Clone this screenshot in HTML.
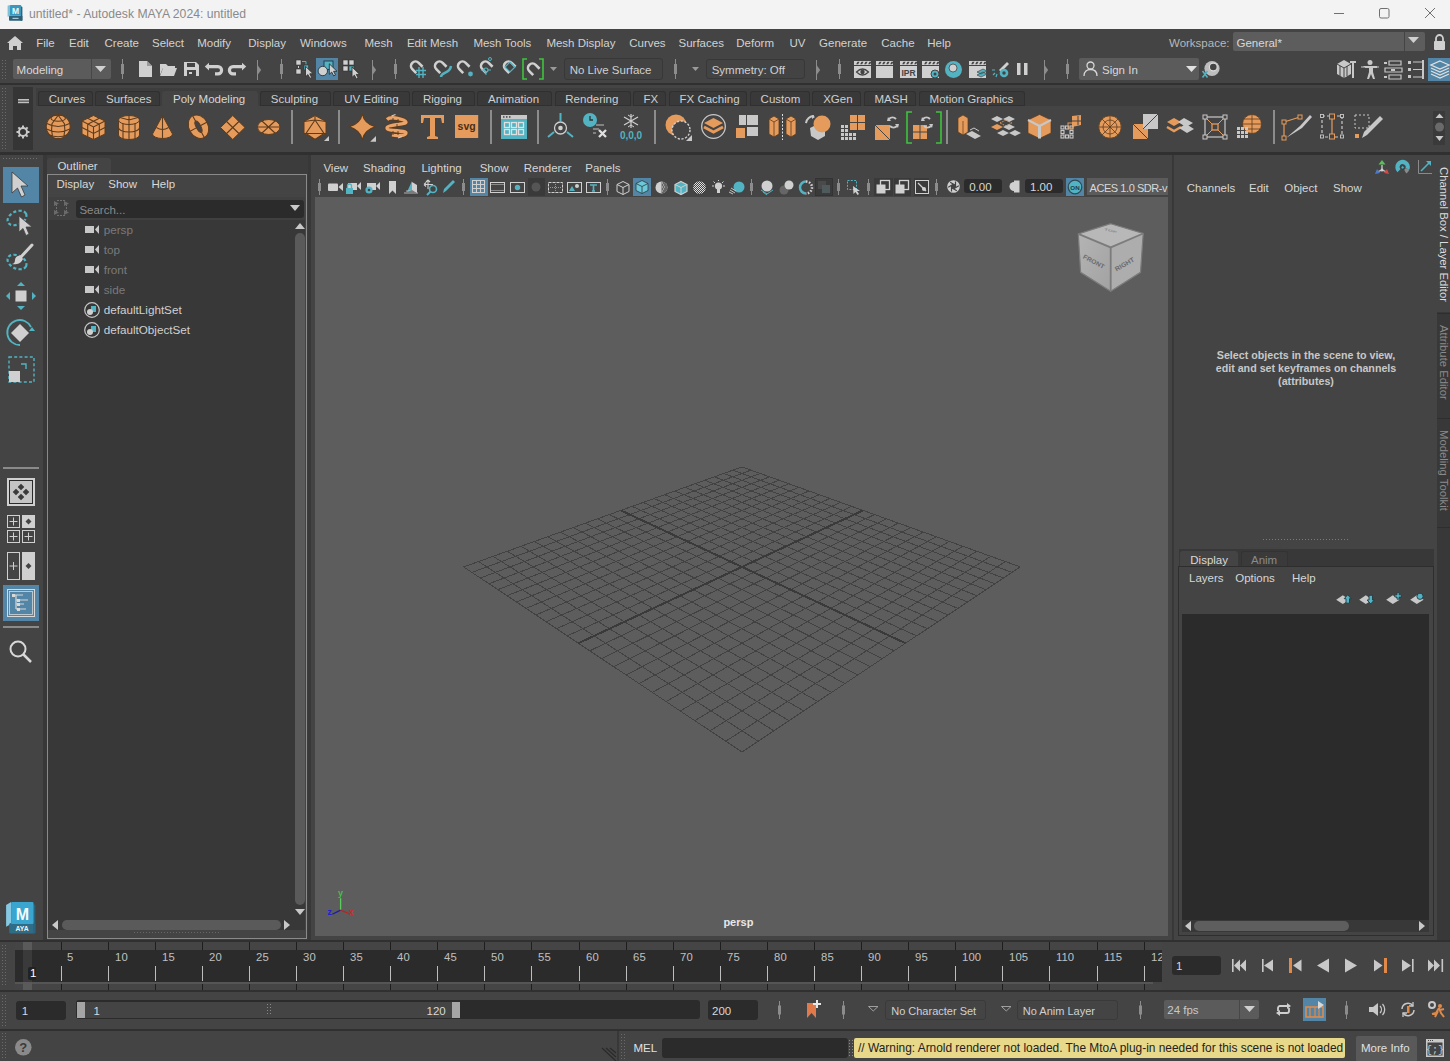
<!DOCTYPE html><html><head><meta charset="utf-8"><style>
html,body{margin:0;padding:0;width:1450px;height:1061px;overflow:hidden;background:#444;}
body>div,body>span,body>svg{position:absolute;}
.t{position:absolute;font-family:"Liberation Sans",sans-serif;white-space:pre;line-height:1;}
svg{overflow:visible}
</style></head><body>
<div style="left:0px;top:0px;width:1450px;height:1061px;background:#444444;"></div>
<div style="left:0px;top:0px;width:1450px;height:29px;background:#f3f3f3;"></div>
<svg style="left:7px;top:4px;" width="17" height="18" viewBox="0 0 17 18"><path d="M0.6 1.8L3 1V12L0.6 12.8z" fill="#7fbfd8"/><rect x="2" y="11.8" width="13.4" height="5" rx="0.8" fill="#2d617a"/><path d="M13.6 2L15.4 3V16.8H13.6z" fill="#2a5f78"/><rect x="3" y="1" width="11.1" height="10.8" rx="0.6" fill="#3b97bb"/><text x="8.6" y="10" font-size="8.5" font-weight="bold" text-anchor="middle" fill="#e8fbff" font-family="Liberation Sans">M</text><rect x="5.5" y="13.8" width="6" height="1.2" fill="#a9c9d6"/></svg>
<span class="t" style="left:29px;top:8.17px;font-size:12.2px;color:#8a8a8a;">untitled* - Autodesk MAYA 2024: untitled</span>
<svg style="left:1334px;top:13px;" width="11" height="2" viewBox="0 0 11 2"><rect width="10" height="1" fill="#707070"/></svg>
<svg style="left:1379px;top:8px;" width="11" height="11" viewBox="0 0 11 11"><rect x="0.5" y="0.5" width="9.5" height="9.5" rx="1.5" fill="none" stroke="#707070"/></svg>
<svg style="left:1425px;top:8px;" width="11" height="11" viewBox="0 0 11 11"><path d="M0 0L10 10M10 0L0 10" stroke="#707070" stroke-width="1"/></svg>
<div style="left:0px;top:29px;width:1450px;height:28px;background:#444444;"></div>
<svg style="left:7px;top:36px;" width="16" height="14" viewBox="0 0 16 14"><path d="M8 0L0 7h2v7h4v-4h4v4h4V7h2z" fill="#cfcfcf"/></svg>
<span class="t" style="left:36.2px;top:37.57px;font-size:11.5px;color:#d2d2d2;">File</span>
<span class="t" style="left:69px;top:37.57px;font-size:11.5px;color:#d2d2d2;">Edit</span>
<span class="t" style="left:104.5px;top:37.57px;font-size:11.5px;color:#d2d2d2;">Create</span>
<span class="t" style="left:152px;top:37.57px;font-size:11.5px;color:#d2d2d2;">Select</span>
<span class="t" style="left:197.2px;top:37.57px;font-size:11.5px;color:#d2d2d2;">Modify</span>
<span class="t" style="left:248.3px;top:37.57px;font-size:11.5px;color:#d2d2d2;">Display</span>
<span class="t" style="left:300px;top:37.57px;font-size:11.5px;color:#d2d2d2;">Windows</span>
<span class="t" style="left:364.5px;top:37.57px;font-size:11.5px;color:#d2d2d2;">Mesh</span>
<span class="t" style="left:406.9px;top:37.57px;font-size:11.5px;color:#d2d2d2;">Edit Mesh</span>
<span class="t" style="left:473.4px;top:37.57px;font-size:11.5px;color:#d2d2d2;">Mesh Tools</span>
<span class="t" style="left:546.4px;top:37.57px;font-size:11.5px;color:#d2d2d2;">Mesh Display</span>
<span class="t" style="left:629.2px;top:37.57px;font-size:11.5px;color:#d2d2d2;">Curves</span>
<span class="t" style="left:678.5px;top:37.57px;font-size:11.5px;color:#d2d2d2;">Surfaces</span>
<span class="t" style="left:736.3px;top:37.57px;font-size:11.5px;color:#d2d2d2;">Deform</span>
<span class="t" style="left:789.4px;top:37.57px;font-size:11.5px;color:#d2d2d2;">UV</span>
<span class="t" style="left:819.1px;top:37.57px;font-size:11.5px;color:#d2d2d2;">Generate</span>
<span class="t" style="left:881.3px;top:37.57px;font-size:11.5px;color:#d2d2d2;">Cache</span>
<span class="t" style="left:927.2px;top:37.57px;font-size:11.5px;color:#d2d2d2;">Help</span>
<span class="t" style="left:1169px;top:37.57px;font-size:11.5px;color:#b8b8b8;">Workspace:</span>
<div style="left:1233px;top:32px;width:192px;height:19px;background:#5d5d5d;border-radius:2px"></div>
<div style="left:1404px;top:32px;width:1px;height:19px;background:#444;"></div>
<span class="t" style="left:1236.5px;top:37.57px;font-size:11.5px;color:#d8d8d8;">General*</span>
<svg style="left:1408px;top:37px;" width="11" height="7" viewBox="0 0 11 7"><path d="M0 0h11L5.5 6z" fill="#d0d0d0"/></svg>
<svg style="left:1433px;top:34px;" width="13" height="16" viewBox="0 0 13 16"><path d="M3 7V4.5a3.5 3.5 0 0 1 7 0V7" fill="none" stroke="#d0d0d0" stroke-width="1.8"/><rect x="1" y="7" width="11" height="9" rx="1" fill="#d0d0d0"/></svg>
<div style="left:0px;top:57px;width:1450px;height:26px;background:#444444;"></div>
<div style="left:0px;top:83px;width:1450px;height:2px;background:#303030;"></div>
<svg style="left:2px;top:60px;" width="4" height="20" viewBox="0 0 4 20"><rect x="0" y="0" width="1" height="1" fill="#6a6a6a"/><rect x="3" y="0" width="1" height="1" fill="#6a6a6a"/><rect x="0" y="3" width="1" height="1" fill="#6a6a6a"/><rect x="3" y="3" width="1" height="1" fill="#6a6a6a"/><rect x="0" y="6" width="1" height="1" fill="#6a6a6a"/><rect x="3" y="6" width="1" height="1" fill="#6a6a6a"/><rect x="0" y="9" width="1" height="1" fill="#6a6a6a"/><rect x="3" y="9" width="1" height="1" fill="#6a6a6a"/><rect x="0" y="12" width="1" height="1" fill="#6a6a6a"/><rect x="3" y="12" width="1" height="1" fill="#6a6a6a"/><rect x="0" y="15" width="1" height="1" fill="#6a6a6a"/><rect x="3" y="15" width="1" height="1" fill="#6a6a6a"/><rect x="0" y="18" width="1" height="1" fill="#6a6a6a"/><rect x="3" y="18" width="1" height="1" fill="#6a6a6a"/></svg>
<div style="left:13px;top:59px;width:98px;height:20px;background:#5b5b5b;border-radius:2px"></div>
<div style="left:91px;top:59px;width:1px;height:20px;background:#474747;"></div>
<span class="t" style="left:16.6px;top:65.27px;font-size:11.5px;color:#d8d8d8;">Modeling</span>
<svg style="left:95px;top:66px;" width="11" height="6" viewBox="0 0 11 6"><path d="M0 0h11L5.5 6z" fill="#cfcfcf"/></svg>
<svg style="left:121.0px;top:59px;" width="3" height="20" viewBox="0 0 3 20"><rect x="1" y="0" width="1" height="20" fill="#8c8c8c"/><rect x="0" y="5.0" width="3" height="10.0" fill="#8c8c8c"/></svg>
<svg style="left:139px;top:61px;" width="13" height="16" viewBox="0 0 13 16"><path d="M0 0h8l5 5v11H0z" fill="#d0d0d0"/><path d="M8 0v5h5" fill="#9a9a9a"/></svg>
<svg style="left:160px;top:63px;" width="17" height="13" viewBox="0 0 17 13"><path d="M0 1h6l2 2h7v2H3L0 12z" fill="#d0d0d0"/><path d="M3 5h14l-3 8H0z" fill="#d0d0d0"/></svg>
<svg style="left:184px;top:62px;" width="15" height="14" viewBox="0 0 15 14"><path d="M0 0h12l3 3v11H0z" fill="#d0d0d0"/><rect x="3" y="1" width="8" height="4" fill="#444"/><rect x="3" y="8" width="9" height="6" fill="#444"/><rect x="5" y="10" width="3" height="2" fill="#d0d0d0"/></svg>
<svg style="left:204px;top:62px;" width="19" height="14" viewBox="0 0 19 14"><path d="M4 4.6H14a3.6 3.6 0 0 1 0 7.2H11" fill="none" stroke="#d0d0d0" stroke-width="3.2"/><path d="M0.8 4.6L5 0.8V8.4z" fill="#d0d0d0"/></svg>
<svg style="left:228px;top:62px;" width="19" height="14" viewBox="0 0 19 14"><path d="M15 4.6H5a3.6 3.6 0 0 0 0 7.2H8" fill="none" stroke="#d0d0d0" stroke-width="3.2"/><path d="M18.2 4.6L14 0.8V8.4z" fill="#d0d0d0"/></svg>
<svg style="left:257px;top:59.5px;" width="5" height="20" viewBox="0 0 5 20"><rect x="0" y="0" width="1" height="20" fill="#8c8c8c"/><path d="M0.5 5L4.2 10L0.5 15z" fill="#8c8c8c"/></svg>
<svg style="left:280.0px;top:59px;" width="3" height="20" viewBox="0 0 3 20"><rect x="1" y="0" width="1" height="20" fill="#8c8c8c"/><rect x="0" y="5.0" width="3" height="10.0" fill="#8c8c8c"/></svg>
<svg style="left:294px;top:58px;" width="22" height="22" viewBox="0 0 22 22"><rect x="2" y="2" width="5" height="5" fill="#d0d0d0" stroke="#333" stroke-width="0.6"/><rect x="2" y="11" width="5" height="5" fill="#d0d0d0" stroke="#333" stroke-width="0.6"/><rect x="4" y="8" width="1" height="2" fill="#d0d0d0"/><path d="M8 3.5h4v3" fill="none" stroke="#52b3c2" stroke-width="1"/><rect x="10" y="7" width="4.5" height="5" fill="#52b3c2" stroke="#333" stroke-width="0.6"/><path d="M11.5 8.3v10.5l2.4-2.2 2 3.8 1.8-0.9-1.9-3.7h3.4z" fill="#d0d0d0" stroke="#333" stroke-width="0.9"/></svg>
<div style="left:316px;top:57.8px;width:22px;height:22.2px;background:#5285a6;"></div>
<svg style="left:316px;top:58px;" width="22" height="22" viewBox="0 0 22 22"><rect x="8" y="3" width="9" height="8.5" fill="#52b3c2" stroke="#1f3540" stroke-width="0.9"/><circle cx="6.8" cy="13" r="4.7" fill="#d0d0d0" stroke="#1f3540" stroke-width="0.9"/><path d="M13.3 5.8v10.5l2.4-2.2 2 3.8 1.8-0.9-1.9-3.7h3.4z" fill="#d0d0d0" stroke="#1f3540" stroke-width="0.9"/></svg>
<svg style="left:342px;top:58px;" width="22" height="22" viewBox="0 0 22 22"><rect x="1" y="2" width="5" height="5" fill="#d0d0d0" stroke="#333" stroke-width="0.6"/><rect x="7" y="2" width="5" height="5" fill="#d0d0d0" stroke="#333" stroke-width="0.6"/><rect x="1" y="8" width="5" height="5" fill="#d0d0d0" stroke="#333" stroke-width="0.6"/><rect x="7" y="8" width="5" height="5" fill="#52b3c2" stroke="#333" stroke-width="0.6"/><path d="M10 8.9v10.5l2.4-2.2 2 3.8 1.8-0.9-1.9-3.7h3.4z" fill="#d0d0d0" stroke="#333" stroke-width="0.9"/></svg>
<svg style="left:372px;top:59.5px;" width="5" height="20" viewBox="0 0 5 20"><rect x="0" y="0" width="1" height="20" fill="#8c8c8c"/><path d="M0.5 5L4.2 10L0.5 15z" fill="#8c8c8c"/></svg>
<svg style="left:394.0px;top:59px;" width="3" height="20" viewBox="0 0 3 20"><rect x="1" y="0" width="1" height="20" fill="#8c8c8c"/><rect x="0" y="5.0" width="3" height="10.0" fill="#8c8c8c"/></svg>
<svg style="left:400px;top:53px;" width="24" height="24" viewBox="0 0 24 24"><g transform="translate(4 4)"><path d="M-4.5 5.5V0A4.5 4.5 0 0 1 4.5 0V5.5" fill="none" stroke="#d0d0d0" stroke-width="2.6" transform="translate(11.5 9) rotate(-45)"/><path d="M15 10v11M19 10v11M12 13.5h10M12 17.5h10" stroke="#52b3c2" stroke-width="1.4"/></g></svg>
<svg style="left:424px;top:53px;" width="24" height="24" viewBox="0 0 24 24"><g transform="translate(4 4)"><path d="M-4.5 5.5V0A4.5 4.5 0 0 1 4.5 0V5.5" fill="none" stroke="#d0d0d0" stroke-width="2.6" transform="translate(11.5 9) rotate(-45)"/><path d="M13 20c0-5 9-3 10-11" fill="none" stroke="#52b3c2" stroke-width="2.4"/></g></svg>
<svg style="left:447px;top:53px;" width="24" height="24" viewBox="0 0 24 24"><g transform="translate(4 4)"><path d="M-4.5 5.5V0A4.5 4.5 0 0 1 4.5 0V5.5" fill="none" stroke="#d0d0d0" stroke-width="2.6" transform="translate(11.5 9) rotate(-45)"/><circle cx="19.5" cy="17" r="2.4" fill="#52b3c2"/></g></svg>
<svg style="left:470px;top:53px;" width="24" height="24" viewBox="0 0 24 24"><g transform="translate(4 4)"><path d="M-4.5 5.5V0A4.5 4.5 0 0 1 4.5 0V5.5" fill="none" stroke="#d0d0d0" stroke-width="2.6" transform="translate(11.5 9) rotate(-45)"/><circle cx="12" cy="13" r="2" fill="none" stroke="#52b3c2" stroke-width="1.2"/><circle cx="16" cy="2" r="1.5" fill="none" stroke="#52b3c2"/><path d="M7 13h3M14 13h3M12 15v3" stroke="#52b3c2"/></g></svg>
<svg style="left:493px;top:53px;" width="24" height="24" viewBox="0 0 24 24"><g transform="translate(4 4)"><path d="M-4.5 5.5V0A4.5 4.5 0 0 1 4.5 0V5.5" fill="none" stroke="#d0d0d0" stroke-width="2.6" transform="translate(11.5 9) rotate(-45)"/><path d="M8 10l5-5 5 5-5 5z" fill="none" stroke="#52b3c2" stroke-width="1.2"/></g></svg>
<svg style="left:522px;top:58px;" width="22" height="22" viewBox="0 0 22 22"><path d="M5 1H1v20h4M17 1h4v20h-4" fill="none" stroke="#3ec43e" stroke-width="1.6"/><path d="M-4.5 5.5V0A4.5 4.5 0 0 1 4.5 0V5.5" fill="none" stroke="#d0d0d0" stroke-width="2.6" transform="translate(10.5 10) rotate(-45)"/></svg>
<svg style="left:550px;top:67px;" width="7" height="4" viewBox="0 0 7 4"><path d="M0 0h7L3.5 4z" fill="#9a9a9a"/></svg>
<div style="left:563.5px;top:58px;width:99px;height:22px;background:#434343;border:1px solid #383838;border-radius:3px;box-sizing:border-box"></div>
<span class="t" style="left:569.7px;top:65.27px;font-size:11.5px;color:#d0d0d0;">No Live Surface</span>
<svg style="left:674.0px;top:59px;" width="3" height="20" viewBox="0 0 3 20"><rect x="1" y="0" width="1" height="20" fill="#8c8c8c"/><rect x="0" y="5.0" width="3" height="10.0" fill="#8c8c8c"/></svg>
<svg style="left:692px;top:67px;" width="7" height="4" viewBox="0 0 7 4"><path d="M0 0h7L3.5 4z" fill="#9a9a9a"/></svg>
<div style="left:705.7px;top:58.6px;width:99px;height:20.5px;background:#434343;border:1px solid #383838;border-radius:3px;box-sizing:border-box"></div>
<span class="t" style="left:711.7px;top:65.27px;font-size:11.5px;color:#d0d0d0;">Symmetry: Off</span>
<svg style="left:815.5px;top:59.5px;" width="5" height="20" viewBox="0 0 5 20"><rect x="0" y="0" width="1" height="20" fill="#8c8c8c"/><path d="M0.5 5L4.2 10L0.5 15z" fill="#8c8c8c"/></svg>
<svg style="left:838.1px;top:59px;" width="3" height="20" viewBox="0 0 3 20"><rect x="1" y="0" width="1" height="20" fill="#8c8c8c"/><rect x="0" y="5.0" width="3" height="10.0" fill="#8c8c8c"/></svg>
<svg style="left:853.6px;top:61px;" width="17" height="17" viewBox="0 0 17 17"><rect x="0" y="0" width="17" height="4" fill="#d0d0d0"/><rect x="4" y="0.8" width="2" height="2.4" fill="#444" transform="skewX(-30)"/><rect x="8" y="0.8" width="2" height="2.4" fill="#444" transform="skewX(-30)"/><rect x="12" y="0.8" width="2" height="2.4" fill="#444" transform="skewX(-30)"/><rect x="16" y="0.8" width="2" height="2.4" fill="#444" transform="skewX(-30)"/><rect x="0" y="5" width="17" height="12" fill="#d0d0d0"/><path d="M2.5 11Q8.5 5 14.5 11Q8.5 17 2.5 11z" fill="none" stroke="#444" stroke-width="1.2"/><circle cx="8.5" cy="11" r="2.2" fill="#444"/></svg>
<svg style="left:876.3px;top:61px;" width="17" height="17" viewBox="0 0 17 17"><rect x="0" y="0" width="17" height="4" fill="#d0d0d0"/><rect x="4" y="0.8" width="2" height="2.4" fill="#444" transform="skewX(-30)"/><rect x="8" y="0.8" width="2" height="2.4" fill="#444" transform="skewX(-30)"/><rect x="12" y="0.8" width="2" height="2.4" fill="#444" transform="skewX(-30)"/><rect x="16" y="0.8" width="2" height="2.4" fill="#444" transform="skewX(-30)"/><rect x="0" y="5" width="17" height="12" fill="#d0d0d0"/></svg>
<svg style="left:899.5px;top:61px;" width="17" height="17" viewBox="0 0 17 17"><rect x="0" y="0" width="17" height="4" fill="#d0d0d0"/><rect x="4" y="0.8" width="2" height="2.4" fill="#444" transform="skewX(-30)"/><rect x="8" y="0.8" width="2" height="2.4" fill="#444" transform="skewX(-30)"/><rect x="12" y="0.8" width="2" height="2.4" fill="#444" transform="skewX(-30)"/><rect x="16" y="0.8" width="2" height="2.4" fill="#444" transform="skewX(-30)"/><rect x="0" y="5" width="17" height="12" fill="#d0d0d0"/><text x="8.5" y="15" font-size="8.5" font-weight="bold" text-anchor="middle" fill="#444" font-family="Liberation Sans">IPR</text></svg>
<svg style="left:922.4px;top:61px;" width="17" height="17" viewBox="0 0 17 17"><rect x="0" y="0" width="17" height="4" fill="#d0d0d0"/><rect x="4" y="0.8" width="2" height="2.4" fill="#444" transform="skewX(-30)"/><rect x="8" y="0.8" width="2" height="2.4" fill="#444" transform="skewX(-30)"/><rect x="12" y="0.8" width="2" height="2.4" fill="#444" transform="skewX(-30)"/><rect x="16" y="0.8" width="2" height="2.4" fill="#444" transform="skewX(-30)"/><rect x="0" y="5" width="17" height="12" fill="#d0d0d0"/><circle cx="13" cy="13" r="4" fill="#52b3c2" stroke="#444"/><circle cx="13" cy="13" r="1.5" fill="#444"/></svg>
<svg style="left:945px;top:61px;" width="17" height="17" viewBox="0 0 17 17"><circle cx="8.5" cy="8.5" r="8.5" fill="#52b3c2"/><circle cx="8" cy="7" r="4" fill="#d0d0d0" stroke="#333" stroke-width="0.7"/></svg>
<svg style="left:968.8px;top:61px;" width="17" height="17" viewBox="0 0 17 17"><rect x="0" y="0" width="17" height="4" fill="#d0d0d0"/><rect x="4" y="0.8" width="2" height="2.4" fill="#444" transform="skewX(-30)"/><rect x="8" y="0.8" width="2" height="2.4" fill="#444" transform="skewX(-30)"/><rect x="12" y="0.8" width="2" height="2.4" fill="#444" transform="skewX(-30)"/><rect x="16" y="0.8" width="2" height="2.4" fill="#444" transform="skewX(-30)"/><rect x="0" y="5" width="17" height="12" fill="#d0d0d0"/><path d="M8 11l6-3 4 2-6 3z M8 14l6-3 4 2-6 3z" fill="#52b3c2" stroke="#444" stroke-width="0.7"/></svg>
<svg style="left:991.7px;top:61px;" width="18" height="17" viewBox="0 0 18 17"><path d="M7 9L15 1l2 2-8 8z" fill="#d0d0d0"/><path d="M0 9h3M3 12l-2 2M5 13l-1 3" stroke="#52b3c2" stroke-width="1.2"/><circle cx="12" cy="12" r="4.3" fill="#52b3c2"/><circle cx="12" cy="12" r="1.7" fill="#444"/></svg>
<svg style="left:1017px;top:63px;" width="11" height="12" viewBox="0 0 11 12"><rect x="0" y="0" width="3.5" height="12" fill="#d0d0d0"/><rect x="7" y="0" width="3.5" height="12" fill="#d0d0d0"/></svg>
<svg style="left:1044px;top:59.5px;" width="5" height="20" viewBox="0 0 5 20"><rect x="0" y="0" width="1" height="20" fill="#8c8c8c"/><path d="M0.5 5L4.2 10L0.5 15z" fill="#8c8c8c"/></svg>
<svg style="left:1066.0px;top:59px;" width="3" height="20" viewBox="0 0 3 20"><rect x="1" y="0" width="1" height="20" fill="#8c8c8c"/><rect x="0" y="5.0" width="3" height="10.0" fill="#8c8c8c"/></svg>
<div style="left:1079px;top:58px;width:120px;height:22px;background:#5b5b5b;border-radius:2px"></div>
<svg style="left:1083px;top:61px;" width="15" height="15" viewBox="0 0 15 15"><circle cx="7.5" cy="4.5" r="3.5" fill="none" stroke="#d8d8d8" stroke-width="1.3"/><path d="M1 15c0-5 3-6.5 6.5-6.5S14 10 14 15" fill="none" stroke="#d8d8d8" stroke-width="1.3"/></svg>
<span class="t" style="left:1102px;top:65.27px;font-size:11.5px;color:#d8d8d8;">Sign In</span>
<svg style="left:1186px;top:66px;" width="11" height="6" viewBox="0 0 11 6"><path d="M0 0h11L5.5 6z" fill="#e0e0e0"/></svg>
<svg style="left:1201px;top:59px;" width="22" height="20" viewBox="0 0 22 20"><circle cx="11" cy="9.5" r="7.6" fill="#bdbdbd"/><circle cx="12.3" cy="8" r="3.9" fill="#444" stroke="#dcdcdc" stroke-width="1.2"/><path d="M1.5 12l5 6.5M6.5 12l-5 6.5" stroke="#52b3c2" stroke-width="1.6"/></svg>
<svg style="left:1337px;top:60px;" width="19" height="18" viewBox="0 0 19 18"><path d="M0 4l7-4 7 4v10l-7 4-7-4z" fill="#c8c8c8"/><path d="M7 8v10M0 4l7 4 7-4" stroke="#444" fill="none"/><path d="M3 6v10M10 6v10" stroke="#444"/><rect x="13" y="1" width="6" height="2" fill="#c8c8c8"/><rect x="15" y="1" width="2" height="17" fill="#c8c8c8"/></svg>
<svg style="left:1361px;top:60px;" width="18" height="19" viewBox="0 0 18 19"><circle cx="9" cy="2.5" r="2.5" fill="#c8c8c8"/><path d="M2 6h14v2h-4v4l2 7h-2l-2-5-2 5H6l2-7V8H4z" fill="#c8c8c8"/><path d="M0 7h3M15 7h3" stroke="#c8c8c8"/></svg>
<svg style="left:1384px;top:60px;" width="19" height="19" viewBox="0 0 19 19"><path d="M5 1h12v4H5zM1 8h17v4H1zM5 15h12v4H5z" fill="none" stroke="#c8c8c8" stroke-width="1.2"/><rect x="0" y="2" width="3" height="2" fill="#c8c8c8"/><rect x="7" y="9" width="4" height="2" fill="#c8c8c8"/><rect x="0" y="16" width="3" height="2" fill="#c8c8c8"/></svg>
<svg style="left:1408px;top:60px;" width="16" height="19" viewBox="0 0 16 19"><path d="M5 2h9M5 9.5h9M5 17h9" stroke="#c8c8c8" stroke-width="1.2"/><rect x="0" y="1" width="3" height="3" fill="#c8c8c8"/><rect x="0" y="8" width="3" height="3" fill="#c8c8c8"/><rect x="0" y="15" width="3" height="3" fill="#c8c8c8"/><rect x="14" y="0" width="2" height="19" fill="#c8c8c8"/></svg>
<div style="left:1428px;top:58px;width:22px;height:23px;background:#5285a6;"></div>
<svg style="left:1431px;top:61px;" width="18" height="17" viewBox="0 0 18 17"><path d="M9 0l9 4-9 4-9-4z M0 7l9 4 9-4 M0 10l9 4 9-4 M0 13l9 4 9-4" fill="none" stroke="#e0e0e0" stroke-width="1.3"/></svg>
<div style="left:0px;top:85px;width:1450px;height:68px;background:#444;"></div>
<svg style="left:2px;top:88px;" width="4" height="62" viewBox="0 0 4 62"><rect x="0" y="0" width="1" height="1" fill="#6a6a6a"/><rect x="3" y="0" width="1" height="1" fill="#6a6a6a"/><rect x="0" y="3" width="1" height="1" fill="#6a6a6a"/><rect x="3" y="3" width="1" height="1" fill="#6a6a6a"/><rect x="0" y="6" width="1" height="1" fill="#6a6a6a"/><rect x="3" y="6" width="1" height="1" fill="#6a6a6a"/><rect x="0" y="9" width="1" height="1" fill="#6a6a6a"/><rect x="3" y="9" width="1" height="1" fill="#6a6a6a"/><rect x="0" y="12" width="1" height="1" fill="#6a6a6a"/><rect x="3" y="12" width="1" height="1" fill="#6a6a6a"/><rect x="0" y="15" width="1" height="1" fill="#6a6a6a"/><rect x="3" y="15" width="1" height="1" fill="#6a6a6a"/><rect x="0" y="18" width="1" height="1" fill="#6a6a6a"/><rect x="3" y="18" width="1" height="1" fill="#6a6a6a"/><rect x="0" y="21" width="1" height="1" fill="#6a6a6a"/><rect x="3" y="21" width="1" height="1" fill="#6a6a6a"/><rect x="0" y="24" width="1" height="1" fill="#6a6a6a"/><rect x="3" y="24" width="1" height="1" fill="#6a6a6a"/><rect x="0" y="27" width="1" height="1" fill="#6a6a6a"/><rect x="3" y="27" width="1" height="1" fill="#6a6a6a"/><rect x="0" y="30" width="1" height="1" fill="#6a6a6a"/><rect x="3" y="30" width="1" height="1" fill="#6a6a6a"/><rect x="0" y="33" width="1" height="1" fill="#6a6a6a"/><rect x="3" y="33" width="1" height="1" fill="#6a6a6a"/><rect x="0" y="36" width="1" height="1" fill="#6a6a6a"/><rect x="3" y="36" width="1" height="1" fill="#6a6a6a"/><rect x="0" y="39" width="1" height="1" fill="#6a6a6a"/><rect x="3" y="39" width="1" height="1" fill="#6a6a6a"/><rect x="0" y="42" width="1" height="1" fill="#6a6a6a"/><rect x="3" y="42" width="1" height="1" fill="#6a6a6a"/><rect x="0" y="45" width="1" height="1" fill="#6a6a6a"/><rect x="3" y="45" width="1" height="1" fill="#6a6a6a"/><rect x="0" y="48" width="1" height="1" fill="#6a6a6a"/><rect x="3" y="48" width="1" height="1" fill="#6a6a6a"/><rect x="0" y="51" width="1" height="1" fill="#6a6a6a"/><rect x="3" y="51" width="1" height="1" fill="#6a6a6a"/><rect x="0" y="54" width="1" height="1" fill="#6a6a6a"/><rect x="3" y="54" width="1" height="1" fill="#6a6a6a"/><rect x="0" y="57" width="1" height="1" fill="#6a6a6a"/><rect x="3" y="57" width="1" height="1" fill="#6a6a6a"/><rect x="0" y="60" width="1" height="1" fill="#6a6a6a"/><rect x="3" y="60" width="1" height="1" fill="#6a6a6a"/></svg>
<div style="left:13px;top:87px;width:20px;height:63px;background:#353535;"></div>
<svg style="left:18px;top:99px;" width="11" height="4" viewBox="0 0 11 4"><rect width="11" height="1.6" fill="#c0c0c0"/><rect y="2.6" width="11" height="1.6" fill="#c0c0c0"/></svg>
<svg style="left:16px;top:125px;" width="14" height="14" viewBox="0 0 14 14"><circle cx="7" cy="7" r="4" fill="none" stroke="#c8c8c8" stroke-width="2"/><rect x="6" y="0.5" width="2" height="3" fill="#c8c8c8" transform="rotate(0 7 7)"/><rect x="6" y="0.5" width="2" height="3" fill="#c8c8c8" transform="rotate(45 7 7)"/><rect x="6" y="0.5" width="2" height="3" fill="#c8c8c8" transform="rotate(90 7 7)"/><rect x="6" y="0.5" width="2" height="3" fill="#c8c8c8" transform="rotate(135 7 7)"/><rect x="6" y="0.5" width="2" height="3" fill="#c8c8c8" transform="rotate(180 7 7)"/><rect x="6" y="0.5" width="2" height="3" fill="#c8c8c8" transform="rotate(225 7 7)"/><rect x="6" y="0.5" width="2" height="3" fill="#c8c8c8" transform="rotate(270 7 7)"/><rect x="6" y="0.5" width="2" height="3" fill="#c8c8c8" transform="rotate(315 7 7)"/></svg>
<div style="left:36px;top:88px;width:1414px;height:18px;background:#3d3d3d;"></div>
<div style="left:38px;top:91px;width:55.099999999999994px;height:15px;background:#393939;border-radius:3px 3px 0 0;box-shadow:inset 0 0 0 1px #303030"></div>
<span class="t" style="left:48.8px;top:94.27px;font-size:11.5px;color:#cfcfcf;">Curves</span>
<div style="left:95.4px;top:91px;width:64.6px;height:15px;background:#393939;border-radius:3px 3px 0 0;box-shadow:inset 0 0 0 1px #303030"></div>
<span class="t" style="left:106px;top:94.27px;font-size:11.5px;color:#cfcfcf;">Surfaces</span>
<div style="left:161.8px;top:90.5px;width:95.89999999999998px;height:15.5px;background:#444;border-radius:3px 3px 0 0;"></div>
<span class="t" style="left:173px;top:94.27px;font-size:11.5px;color:#d6d6d6;">Poly Modeling</span>
<div style="left:260.4px;top:91px;width:70.60000000000002px;height:15px;background:#393939;border-radius:3px 3px 0 0;box-shadow:inset 0 0 0 1px #303030"></div>
<span class="t" style="left:270.8px;top:94.27px;font-size:11.5px;color:#cfcfcf;">Sculpting</span>
<div style="left:333px;top:91px;width:76.80000000000001px;height:15px;background:#393939;border-radius:3px 3px 0 0;box-shadow:inset 0 0 0 1px #303030"></div>
<span class="t" style="left:344.3px;top:94.27px;font-size:11.5px;color:#cfcfcf;">UV Editing</span>
<div style="left:411.5px;top:91px;width:63.5px;height:15px;background:#393939;border-radius:3px 3px 0 0;box-shadow:inset 0 0 0 1px #303030"></div>
<span class="t" style="left:423px;top:94.27px;font-size:11.5px;color:#cfcfcf;">Rigging</span>
<div style="left:477.4px;top:91px;width:74.60000000000002px;height:15px;background:#393939;border-radius:3px 3px 0 0;box-shadow:inset 0 0 0 1px #303030"></div>
<span class="t" style="left:488px;top:94.27px;font-size:11.5px;color:#cfcfcf;">Animation</span>
<div style="left:554.5px;top:91px;width:76.0px;height:15px;background:#393939;border-radius:3px 3px 0 0;box-shadow:inset 0 0 0 1px #303030"></div>
<span class="t" style="left:565.3px;top:94.27px;font-size:11.5px;color:#cfcfcf;">Rendering</span>
<div style="left:632.9px;top:91px;width:33.10000000000002px;height:15px;background:#393939;border-radius:3px 3px 0 0;box-shadow:inset 0 0 0 1px #303030"></div>
<span class="t" style="left:643.4px;top:94.27px;font-size:11.5px;color:#cfcfcf;">FX</span>
<div style="left:668.7px;top:91px;width:78.29999999999995px;height:15px;background:#393939;border-radius:3px 3px 0 0;box-shadow:inset 0 0 0 1px #303030"></div>
<span class="t" style="left:679.5px;top:94.27px;font-size:11.5px;color:#cfcfcf;">FX Caching</span>
<div style="left:749.8px;top:91px;width:59.80000000000007px;height:15px;background:#393939;border-radius:3px 3px 0 0;box-shadow:inset 0 0 0 1px #303030"></div>
<span class="t" style="left:760.6px;top:94.27px;font-size:11.5px;color:#cfcfcf;">Custom</span>
<div style="left:812.3px;top:91px;width:49.0px;height:15px;background:#393939;border-radius:3px 3px 0 0;box-shadow:inset 0 0 0 1px #303030"></div>
<span class="t" style="left:823.2px;top:94.27px;font-size:11.5px;color:#cfcfcf;">XGen</span>
<div style="left:863.7px;top:91px;width:52.299999999999955px;height:15px;background:#393939;border-radius:3px 3px 0 0;box-shadow:inset 0 0 0 1px #303030"></div>
<span class="t" style="left:874.5px;top:94.27px;font-size:11.5px;color:#cfcfcf;">MASH</span>
<div style="left:918.8px;top:91px;width:106.10000000000014px;height:15px;background:#393939;border-radius:3px 3px 0 0;box-shadow:inset 0 0 0 1px #303030"></div>
<span class="t" style="left:929.6px;top:94.27px;font-size:11.5px;color:#cfcfcf;">Motion Graphics</span>
<svg style="left:45.8px;top:114.3px;" width="25" height="25.5" viewBox="0 0 25 25.5"><circle cx="12.2" cy="12.6" r="12" fill="#e59b5b" stroke="#5c3b1e" stroke-width="1.1"/><ellipse cx="12.2" cy="4.2" rx="7.2" ry="3" stroke="#5c3b1e" stroke-width="1.1" fill="none"/><path d="M0.8 9.5Q12.2 15.5 23.6 9.5M0.5 15Q12.2 21 23.9 15M2.5 20.5Q12.2 25 21.9 20.5M12.2 1.2L6 9.8Q4.8 16 6.6 23M12.2 1.2L18.4 9.8Q19.6 16 17.8 23" stroke="#5c3b1e" stroke-width="1.1" fill="none"/></svg>
<svg style="left:80.5px;top:114.5px;" width="25" height="25" viewBox="0 0 25 25"><path d="M12.5 0.5L24 6v13L12.5 24.5L1 19V6z" fill="#e59b5b" stroke="#5c3b1e"/><path d="M1 6l11.5 6L24 6M12.5 12v12.5M6.7 3.2l11.5 6M18.3 3.2L6.7 9.2M1 12.5l11.5 6 11.5-6M6.7 9v13M18.3 9v13" stroke="#5c3b1e" stroke-width="1.1" fill="none"/></svg>
<svg style="left:117.5px;top:114.5px;" width="22" height="25" viewBox="0 0 22 25"><path d="M0.5 5v15a10.5 4.5 0 0 0 21 0V5z" fill="#e59b5b" stroke="#5c3b1e"/><ellipse cx="11" cy="5" rx="10.5" ry="4.5" fill="#e59b5b" stroke="#5c3b1e"/><path d="M0.5 12.5a10.5 4.5 0 0 0 21 0M11 9.5v15M5 9v14M17 9v14M11 0.5v9M2 2.5l9 2.5 9-2.5" stroke="#5c3b1e" stroke-width="1.1" fill="none"/></svg>
<svg style="left:152.3px;top:115px;" width="21" height="24" viewBox="0 0 21 24"><path d="M10.5 0.5L0.5 19a10 4.5 0 0 0 20 0z" fill="#e59b5b" stroke="#5c3b1e"/><path d="M10.5 0.5v23M4.3 12.5Q10.5 16.5 16.7 12.5" stroke="#5c3b1e" stroke-width="1.1" fill="none"/></svg>
<svg style="left:187.7px;top:114.3px;" width="21" height="25.5" viewBox="0 0 21 25.5"><g transform="rotate(-28 10.5 12.7)"><ellipse cx="10.5" cy="12.7" rx="9.6" ry="12.3" fill="#e59b5b" stroke="#5c3b1e"/><ellipse cx="10.5" cy="12.7" rx="2.3" ry="6.3" fill="#444" stroke="#5c3b1e"/><path d="M1 12.7h7M13 12.7h7.4M10.5 0.5v6M10.5 19v6" stroke="#5c3b1e" stroke-width="1.1" fill="none"/></g></svg>
<svg style="left:220.2px;top:115px;" width="25.5" height="25" viewBox="0 0 25.5 25"><path d="M12.75 0.5L25 12.5L12.75 24.5L0.5 12.5z" fill="#e59b5b" stroke="#5c3b1e"/><path d="M6.6 6.5L18.9 18.5M18.9 6.5L6.6 18.5" stroke="#5c3b1e" stroke-width="1.1" fill="none"/></svg>
<svg style="left:256.6px;top:119px;" width="23.5" height="16" viewBox="0 0 23.5 16"><ellipse cx="11.75" cy="8" rx="11.3" ry="7.5" fill="#e59b5b" stroke="#5c3b1e"/><path d="M0.5 8h22.5M5 2l13 12M18 2L5 14" stroke="#5c3b1e" stroke-width="1.1" fill="none"/></svg>
<div style="left:291px;top:110px;width:2px;height:34px;background:#8c8c8c;"></div>
<svg style="left:303px;top:114.5px;" width="26.5" height="26" viewBox="0 0 26.5 26"><path d="M12 0.5L23 6.5v12L12 24.5L1 18.5v-12z" fill="#e59b5b" stroke="#5c3b1e"/><path d="M12 5L3 18.5h18z M12 0.5V5M1 6.5L12 5L23 6.5M1 18.5L3 18.5M21 18.5h2M12 24.5L3 18.5M12 24.5L21 18.5" stroke="#5c3b1e" stroke-width="1.1" fill="none"/><path d="M26 21v5h-5z" fill="#c8c8c8"/></svg>
<div style="left:338.4px;top:110px;width:2px;height:34px;background:#8c8c8c;"></div>
<svg style="left:347.7px;top:113px;" width="29" height="29" viewBox="0 0 29 29"><path d="M14.3 0.8Q16.3 10.6 27.3 13.8Q16.3 17 14.3 26.8Q12.3 17 1.3 13.8Q12.3 10.6 14.3 0.8z" fill="#e59b5b" stroke="#5c3b1e" stroke-width="1.1" stroke-linejoin="round"/><path d="M28 23v5.8h-5.8z" fill="#c8c8c8"/></svg>
<svg style="left:384px;top:114px;" width="26" height="26" viewBox="0 0 26 26"><path d="M3 5.5c4-4 18 0 19 2.5S3 10.5 3 14s19 2 19 5-9 3-14 2" fill="none" stroke="#5c3b1e" stroke-width="5"/><path d="M3 5.5c4-4 18 0 19 2.5S3 10.5 3 14s19 2 19 5-9 3-14 2" fill="none" stroke="#e8a46a" stroke-width="3.3"/><path d="M9 4v4M14 5v4M13 10v4M9 17v4M14 17v4" stroke="#5c3b1e" stroke-width="0.9"/><path d="M7.5 2l4-1.5M14 24l4-1.5" stroke="#d0d0d0" stroke-width="1.3"/></svg>
<svg style="left:421px;top:115px;" width="23" height="24" viewBox="0 0 23 24"><path d="M0 0h23v8h-2l-1-5h-6v18l3 1v2H6v-2l3-1V3H3L2 8H0z" fill="#e59b5b"/></svg>
<svg style="left:455.3px;top:115px;" width="23.2" height="23" viewBox="0 0 23.2 23"><rect width="23.2" height="23" fill="#e59b5b"/><text x="11.6" y="15.5" font-size="10.5" font-weight="bold" text-anchor="middle" fill="#4a3018" font-family="Liberation Sans">svg</text></svg>
<div style="left:490px;top:110px;width:2px;height:34px;background:#8c8c8c;"></div>
<svg style="left:501px;top:115px;" width="26" height="24" viewBox="0 0 26 24"><rect x="0.5" y="0.5" width="25" height="23" fill="#52b3c2"/><rect x="0.5" y="4" width="25" height="19.5" fill="#52b3c2" stroke="#52b3c2"/><rect x="0" y="0" width="26" height="4" fill="#c8c8c8"/><rect x="2" y="1.2" width="1.5" height="1.5" fill="#444"/><rect x="5" y="1.2" width="1.5" height="1.5" fill="#444"/><rect x="8" y="1.2" width="1.5" height="1.5" fill="#444"/><rect x="3.5" y="7.5" width="5" height="5" fill="#52b3c2" stroke="#e0e0e0" stroke-width="1.3"/><rect x="3.5" y="14.5" width="5" height="5" fill="#52b3c2" stroke="#e0e0e0" stroke-width="1.3"/><rect x="10.5" y="7.5" width="5" height="5" fill="#52b3c2" stroke="#e0e0e0" stroke-width="1.3"/><rect x="10.5" y="14.5" width="5" height="5" fill="#52b3c2" stroke="#e0e0e0" stroke-width="1.3"/><rect x="17.5" y="7.5" width="5" height="5" fill="#52b3c2" stroke="#e0e0e0" stroke-width="1.3"/><rect x="17.5" y="14.5" width="5" height="5" fill="#52b3c2" stroke="#e0e0e0" stroke-width="1.3"/></svg>
<div style="left:537px;top:110px;width:2px;height:34px;background:#8c8c8c;"></div>
<svg style="left:548.4px;top:113px;" width="25" height="26" viewBox="0 0 25 26"><circle cx="12.5" cy="15" r="6" fill="none" stroke="#d0d0d0" stroke-width="1.3"/><circle cx="12.5" cy="15" r="2.3" fill="#d0d0d0"/><path d="M12.5 0v8M0 24l6-5M25 24l-6-5" stroke="#52b3c2" stroke-width="2"/></svg>
<svg style="left:583.2px;top:113px;" width="26" height="26" viewBox="0 0 26 26"><circle cx="7" cy="7" r="7" fill="#52b3c2"/><path d="M7 3v4h3" stroke="#333" stroke-width="1.3" fill="none"/><path d="M13 12h8M10 16h6M10 20h3" stroke="#c0c0c0" stroke-width="1.2"/><path d="M16 17l7 7M23 17l-7 7" stroke="#e0e0e0" stroke-width="2.3"/></svg>
<svg style="left:617px;top:113px;" width="28" height="27" viewBox="0 0 28 27"><path d="M14 1v14M7 4l14 8M21 4L7 12" stroke="#d0d0d0" stroke-width="1.2"/><path d="M11 2l3 2 3-2M11 14l3-2 3 2" stroke="#d0d0d0" fill="none"/><text x="14" y="26" font-size="10" font-weight="bold" text-anchor="middle" fill="#52b3c2" font-family="Liberation Sans">0,0,0</text></svg>
<div style="left:654.2px;top:110px;width:2px;height:34px;background:#8c8c8c;"></div>
<svg style="left:664.5px;top:114.3px;" width="28" height="27" viewBox="0 0 28 27"><circle cx="11" cy="11" r="10.5" fill="#e59b5b"/><circle cx="16" cy="16" r="9" fill="#444" stroke="#d0d0d0" stroke-width="1.4" stroke-dasharray="2.2 1.6"/><path d="M27 21v6h-6z" fill="#c8c8c8"/></svg>
<svg style="left:700.7px;top:114.3px;" width="25" height="25" viewBox="0 0 25 25"><circle cx="12.5" cy="12.5" r="11.8" fill="none" stroke="#c8c8c8" stroke-width="1.3"/><path d="M12.5 4L22 9l-9.5 5L3 9z" fill="#e59b5b"/><path d="M3 13l9.5 5 9.5-5" fill="none" stroke="#e59b5b" stroke-width="3"/></svg>
<svg style="left:736px;top:115px;" width="24" height="23" viewBox="0 0 24 23"><rect x="0" y="13" width="9" height="10" fill="#e59b5b"/><rect x="11" y="0" width="11" height="10" fill="#c8c8c8"/><rect x="0" y="0" width="0" height="0"/><rect x="11" y="12" width="11" height="9" fill="#c8c8c8"/><rect x="3" y="0" width="7" height="10" fill="#c8c8c8"/></svg>
<svg style="left:768px;top:113.5px;" width="29" height="26" viewBox="0 0 29 26"><path d="M1 5l5-3 5 3v15l-5 3-5-3z" fill="#e59b5b" stroke="#5c3b1e" stroke-width="0.8"/><path d="M1 5l5 3 5-3M6 8v15" stroke="#5c3b1e" stroke-width="0.8" fill="none"/><path d="M18 5l5-3 5 3v15l-5 3-5-3z" fill="#e59b5b" stroke="#5c3b1e" stroke-width="0.8"/><path d="M18 5l5 3 5-3M23 8v15" stroke="#5c3b1e" stroke-width="0.8" fill="none"/><path d="M14.5 0v26" stroke="#e0e0e0" stroke-dasharray="2 1.5"/></svg>
<svg style="left:803.7px;top:114.5px;" width="27.3" height="26" viewBox="0 0 27.3 26"><path d="M6 13l8-4 7 4v8l-7 4-7-4z" fill="#c8c8c8"/><circle cx="18" cy="9" r="8.5" fill="#e59b5b"/><path d="M2 8a8 8 0 0 1 8-7" fill="none" stroke="#c8c8c8" stroke-width="2"/><path d="M8 0l3 2-3 2z" fill="#c8c8c8"/></svg>
<svg style="left:840.6px;top:115px;" width="24" height="25" viewBox="0 0 24 25"><rect x="9" y="0" width="15" height="15" fill="#e59b5b"/><path d="M16.5 0v15M9 7.5h15" stroke="#444"/><rect x="0" y="10" width="3" height="3" fill="#c8c8c8"/><rect x="0" y="14" width="3" height="3" fill="#c8c8c8"/><rect x="0" y="18" width="3" height="3" fill="#c8c8c8"/><rect x="0" y="22" width="3" height="3" fill="#c8c8c8"/><rect x="4" y="10" width="3" height="3" fill="#c8c8c8"/><rect x="4" y="14" width="3" height="3" fill="#c8c8c8"/><rect x="4" y="18" width="3" height="3" fill="#c8c8c8"/><rect x="4" y="22" width="3" height="3" fill="#c8c8c8"/><rect x="8" y="18" width="3" height="3" fill="#c8c8c8"/><rect x="8" y="22" width="3" height="3" fill="#c8c8c8"/><rect x="12" y="18" width="3" height="3" fill="#c8c8c8"/><rect x="12" y="22" width="3" height="3" fill="#c8c8c8"/></svg>
<svg style="left:875px;top:114.3px;" width="25" height="26" viewBox="0 0 25 26"><path d="M0 11l15 0 0 15H0z" fill="#e59b5b"/><path d="M0 11l15 15" stroke="#444"/><path d="M14 5a5 5 0 0 1 7 0M22 12a5 5 0 0 1-7 0" fill="none" stroke="#c8c8c8" stroke-width="2"/><path d="M13 3l3 4h-4zM23 14l-3-4h4z" fill="#c8c8c8"/></svg>
<svg style="left:906px;top:110.5px;" width="36" height="33" viewBox="0 0 36 33"><path d="M6 1H1v31h5M30 1h5v31h-5" fill="none" stroke="#3ec43e" stroke-width="1.6"/><rect x="7" y="14" width="14" height="14" fill="#e59b5b"/><path d="M14 14v14M7 21h14" stroke="#444"/><path d="M17 8a5 5 0 0 1 7 0M25 15a5 5 0 0 1-7 0" fill="none" stroke="#c8c8c8" stroke-width="2"/><path d="M16 6l3 4h-4zM26 17l-3-4h4z" fill="#c8c8c8"/></svg>
<div style="left:946.2px;top:110px;width:2px;height:34px;background:#8c8c8c;"></div>
<svg style="left:958.4px;top:114px;" width="24" height="26" viewBox="0 0 24 26"><path d="M0 4l5-3 5 3v14l-5 3-5-3z" fill="#e59b5b" stroke="#5c3b1e" stroke-width="0.7"/><path d="M5 7v14" stroke="#5c3b1e" stroke-width="0.7"/><path d="M8 20l6-3 9 5-6 3z" fill="#c8c8c8"/><path d="M12 16l4-2 5 3" fill="none" stroke="#c8c8c8"/></svg>
<svg style="left:989.7px;top:113px;" width="30" height="26" viewBox="0 0 30 26"><path d="M1 6l6-3 6 3-6 3z M13 6l6-3 6 3-6 3z" fill="#c8c8c8"/><path d="M1 14l6-3 6 3-6 3z" fill="#e59b5b"/><path d="M13 14l6-3 6 3-6 3z M7 20l6-3 6 3-6 3z M19 20l6-3 6 3-6 3z" fill="#c8c8c8"/><path d="M10 10l6-3 6 3-6 3z" fill="none" stroke="#e59b5b" stroke-dasharray="1.5 1"/></svg>
<svg style="left:1027.3px;top:114px;" width="25" height="25" viewBox="0 0 25 25"><path d="M12.5 0.5L24 6v13L12.5 24.5L1 19V6z" fill="#e59b5b" stroke="#5c3b1e" stroke-width="0.7"/><path d="M12.5 11v13.5" stroke="#c8c8c8" stroke-width="3"/><path d="M1 6l11.5 6L24 6" fill="none" stroke="#c8c8c8" stroke-width="2"/></svg>
<svg style="left:1060.5px;top:114px;" width="27" height="26" viewBox="0 0 27 26"><path d="M11 2l9-1v10l-9 2z" fill="#e59b5b"/><path d="M17 2v9M11 7h9" stroke="#444"/><rect x="0.0" y="12.0" width="3" height="3" fill="none" stroke="#c8c8c8" stroke-width="1.1"/><rect x="0.0" y="16.5" width="3" height="3" fill="none" stroke="#c8c8c8" stroke-width="1.1"/><rect x="0.0" y="21.0" width="3" height="3" fill="none" stroke="#c8c8c8" stroke-width="1.1"/><rect x="4.5" y="12.0" width="3" height="3" fill="none" stroke="#c8c8c8" stroke-width="1.1"/><rect x="4.5" y="21.0" width="3" height="3" fill="none" stroke="#c8c8c8" stroke-width="1.1"/><rect x="9.0" y="12.0" width="3" height="3" fill="none" stroke="#c8c8c8" stroke-width="1.1"/><rect x="9.0" y="16.5" width="3" height="3" fill="none" stroke="#c8c8c8" stroke-width="1.1"/><rect x="9.0" y="21.0" width="3" height="3" fill="none" stroke="#c8c8c8" stroke-width="1.1"/><rect x="7" y="9" width="5" height="5" fill="none" stroke="#e59b5b"/></svg>
<svg style="left:1097.8px;top:114.5px;" width="24" height="24" viewBox="0 0 24 24"><circle cx="12" cy="12" r="11.3" fill="#e59b5b" stroke="#5c3b1e" stroke-width="0.9"/><circle cx="12" cy="12" r="7" fill="none" stroke="#5c3b1e" stroke-width="0.8"/><path d="M12 1v22M1 12h22M4 4l16 16M20 4L4 20" stroke="#5c3b1e" stroke-width="0.8"/></svg>
<svg style="left:1132.8px;top:114px;" width="25" height="25" viewBox="0 0 25 25"><rect x="0" y="10" width="15" height="15" fill="#e59b5b"/><path d="M0 10l15 15" stroke="#444"/><path d="M10 0h15v15H10z" fill="#c8c8c8"/><path d="M25 0L10 15" stroke="#444"/></svg>
<svg style="left:1166px;top:115px;" width="28" height="22" viewBox="0 0 28 22"><path d="M1 7l7-4 7 4-7 4z" fill="#e59b5b"/><path d="M1 12l7 4 7-4" fill="none" stroke="#e59b5b" stroke-width="2.5"/><path d="M12 7l6-4 9 5-7 4zM13 13l7-4 8 5-7 4z" fill="#c8c8c8"/></svg>
<svg style="left:1203.3px;top:115px;" width="24" height="24" viewBox="0 0 24 24"><rect x="2" y="2" width="20" height="20" fill="none" stroke="#c8c8c8" stroke-width="1.2"/><path d="M2 2l20 20M22 2L2 22" stroke="#e59b5b"/><rect x="9" y="9" width="6" height="6" fill="#444" stroke="#e59b5b" stroke-width="1.3"/><rect x="0" y="0" width="4" height="4" fill="#444" stroke="#c8c8c8"/><rect x="0" y="20" width="4" height="4" fill="#444" stroke="#c8c8c8"/><rect x="20" y="0" width="4" height="4" fill="#444" stroke="#c8c8c8"/><rect x="20" y="20" width="4" height="4" fill="#444" stroke="#c8c8c8"/></svg>
<svg style="left:1237.4px;top:114px;" width="25" height="25" viewBox="0 0 25 25"><circle cx="15" cy="10" r="9.5" fill="#e59b5b" stroke="#5c3b1e" stroke-width="0.8"/><path d="M15 0.5v19M5.5 10h19M7 5h16M7 15h16" stroke="#5c3b1e" stroke-width="0.8"/><rect x="0" y="13" width="3" height="3" fill="#c8c8c8"/><rect x="0" y="17" width="3" height="3" fill="#c8c8c8"/><rect x="0" y="21" width="3" height="3" fill="#c8c8c8"/><rect x="4" y="13" width="3" height="3" fill="#c8c8c8"/><rect x="4" y="17" width="3" height="3" fill="#c8c8c8"/><rect x="4" y="21" width="3" height="3" fill="#c8c8c8"/><rect x="8" y="13" width="3" height="3" fill="#c8c8c8"/><rect x="8" y="17" width="3" height="3" fill="#c8c8c8"/><rect x="8" y="21" width="3" height="3" fill="#c8c8c8"/></svg>
<div style="left:1272.7px;top:110px;width:2px;height:34px;background:#8c8c8c;"></div>
<svg style="left:1282.4px;top:114px;" width="30" height="26" viewBox="0 0 30 26"><path d="M2 8l16-5" stroke="#e59b5b" stroke-width="1.2"/><path d="M2 8v16" stroke="#e59b5b" stroke-width="1.2"/><rect x="0" y="6" width="4" height="4" fill="#444" stroke="#e59b5b"/><rect x="16" y="1" width="4" height="4" fill="#444" stroke="#e59b5b"/><rect x="0" y="22" width="4" height="4" fill="#444" stroke="#e59b5b"/><path d="M4 24l14-12 10-11 2 2-10 11z" fill="#c8c8c8"/></svg>
<svg style="left:1319.7px;top:114px;" width="24.2" height="25" viewBox="0 0 24.2 25"><rect x="2" y="2" width="20" height="21" fill="none" stroke="#c8c8c8" stroke-width="1.2" stroke-dasharray="3 2"/><path d="M12 2v21" stroke="#e59b5b" stroke-width="1.2"/><rect x="9.5" y="0" width="5" height="5" fill="#444" stroke="#e59b5b"/><rect x="9.5" y="20" width="5" height="5" fill="#444" stroke="#e59b5b"/><rect x="0.5" y="0.5" width="3" height="3" fill="#444" stroke="#c8c8c8" stroke-width="0.9"/><rect x="0.5" y="21" width="3" height="3" fill="#444" stroke="#c8c8c8" stroke-width="0.9"/><rect x="20.5" y="0.5" width="3" height="3" fill="#444" stroke="#c8c8c8" stroke-width="0.9"/><rect x="20.5" y="21" width="3" height="3" fill="#444" stroke="#c8c8c8" stroke-width="0.9"/></svg>
<svg style="left:1353.8px;top:114px;" width="28" height="26" viewBox="0 0 28 26"><rect x="1" y="1" width="14" height="13" fill="none" stroke="#c8c8c8" stroke-dasharray="2 2"/><rect x="1" y="20" width="4" height="4" fill="#e59b5b"/><path d="M8 24l2-6 16-16 3 3-16 16z" fill="#c8c8c8"/></svg>
<div style="left:1433px;top:110.7px;width:12.4px;height:34px;background:#3a3a3a;"></div>
<svg style="left:1435px;top:113px;" width="9" height="30" viewBox="0 0 9 30"><path d="M0.5 5L4.5 0.5L8.5 5z" fill="#c8c8c8"/><circle cx="4.5" cy="14" r="4.5" fill="#6a6a6a"/><path d="M0.5 23L4.5 28L8.5 23z" fill="#c8c8c8"/></svg>
<div style="left:0px;top:152px;width:1450px;height:3px;background:#303030;"></div>
<div style="left:0px;top:155px;width:1450px;height:785px;background:#3c3c3c;"></div>
<div style="left:0px;top:155px;width:43px;height:785px;background:#444;"></div>
<svg style="left:3px;top:158px;" width="36" height="3" viewBox="0 0 36 3"><rect x="0" y="0" width="1" height="1" fill="#707070"/><rect x="3" y="0" width="1" height="1" fill="#707070"/><rect x="6" y="0" width="1" height="1" fill="#707070"/><rect x="9" y="0" width="1" height="1" fill="#707070"/><rect x="12" y="0" width="1" height="1" fill="#707070"/><rect x="15" y="0" width="1" height="1" fill="#707070"/><rect x="18" y="0" width="1" height="1" fill="#707070"/><rect x="21" y="0" width="1" height="1" fill="#707070"/><rect x="24" y="0" width="1" height="1" fill="#707070"/><rect x="27" y="0" width="1" height="1" fill="#707070"/><rect x="30" y="0" width="1" height="1" fill="#707070"/><rect x="33" y="0" width="1" height="1" fill="#707070"/></svg>
<div style="left:3px;top:166.5px;width:36px;height:36.5px;background:#5285a6;"></div>
<svg style="left:11px;top:171px;" width="19" height="27" viewBox="0 0 19 27"><path d="M1 1L17 15H10L14 24L10.5 26L6.5 17L1 22z" fill="#d0d0d0" stroke="#3a3a3a" stroke-width="0.8"/></svg>
<svg style="left:6px;top:207.5px;" width="30" height="29" viewBox="0 0 30 29"><ellipse cx="11" cy="10" rx="10" ry="6.5" fill="none" stroke="#52b3c2" stroke-width="2.2" stroke-dasharray="3.2 2.2" transform="rotate(-25 11 10)"/><path d="M13 8L26 19H20L23 26L20 27.5L17 20.5L13 24z" fill="#d0d0d0" stroke="#444" stroke-width="0.8"/></svg>
<svg style="left:6px;top:244px;" width="30" height="29" viewBox="0 0 30 29"><ellipse cx="11" cy="18" rx="10" ry="6.5" fill="none" stroke="#52b3c2" stroke-width="2.2" stroke-dasharray="3.2 2.2" transform="rotate(25 11 18)"/><path d="M26 1L14 14" stroke="#d0d0d0" stroke-width="3" stroke-linecap="round"/><path d="M15 12c-3-1-6 1-6 4s-2 4-3 4c3 1 9 0 11-5z" fill="#d0d0d0"/></svg>
<svg style="left:6px;top:282px;" width="30" height="28" viewBox="0 0 30 28"><rect x="9.5" y="8.5" width="11" height="11" fill="#d0d0d0"/><path d="M15 0l4 4h-8zM15 28l4-4h-8zM0 14l4-4v8zM30 14l-4-4v8z" fill="#52b3c2"/></svg>
<svg style="left:5px;top:317px;" width="31" height="30" viewBox="0 0 31 30"><path d="M26 10A12.5 12.5 0 1 0 15 28" fill="none" stroke="#52b3c2" stroke-width="1.8"/><path d="M24 14l3-4 3 4z" fill="#52b3c2"/><path d="M15 7l9 9-9 9-9-9z" fill="#d0d0d0"/></svg>
<svg style="left:8px;top:356px;" width="27" height="28" viewBox="0 0 27 28"><rect x="1" y="1" width="25" height="25" fill="none" stroke="#52b3c2" stroke-width="1.4" stroke-dasharray="3 2.2"/><rect x="1" y="15" width="11" height="11" fill="#d0d0d0"/><path d="M13 8h5v5" fill="none" stroke="#52b3c2" stroke-width="1.4"/></svg>
<div style="left:3px;top:467px;width:36px;height:2px;background:#8a8a8a;"></div>
<svg style="left:7px;top:478px;" width="28" height="28" viewBox="0 0 28 28"><rect x="0" y="0" width="28" height="28" fill="#d0d0d0"/><rect x="2.5" y="2.5" width="23" height="23" fill="#c4c4c4" stroke="#2a2a2a"/><path d="M14 5.7l3.3 3.3-3.3 3.3-3.3-3.3zM8.7 14l-3.3-3.3 0 0zM5.7 14l3.3-3.3 3.3 3.3-3.3 3.3zM22.3 14l-3.3-3.3-3.3 3.3 3.3 3.3zM14 22.3l3.3-3.3-3.3-3.3-3.3 3.3z" fill="#3a3a3a"/></svg>
<svg style="left:7px;top:514.7px;" width="28" height="28" viewBox="0 0 28 28"><rect x="0.5" y="0.5" width="12" height="12" fill="none" stroke="#d0d0d0"/><path d="M6.5 2.5v8M2.5 6.5h8" stroke="#d0d0d0"/><rect x="15" y="0" width="13" height="13" fill="#d0d0d0"/><path d="M21.5 3.5l3 3-3 3-3-3z" fill="#444"/><rect x="0.5" y="15.5" width="12" height="12" fill="none" stroke="#d0d0d0"/><path d="M6.5 17.5v8M2.5 21.5h8" stroke="#d0d0d0"/><rect x="15.5" y="15.5" width="12" height="12" fill="none" stroke="#d0d0d0"/><path d="M21.5 17.5v8M17.5 21.5h8" stroke="#d0d0d0"/></svg>
<svg style="left:7px;top:552px;" width="28" height="28" viewBox="0 0 28 28"><rect x="0.5" y="0.5" width="12" height="27" fill="none" stroke="#d0d0d0"/><path d="M6.5 10.0v8M2.5 14.0h8" stroke="#d0d0d0"/><rect x="15" y="0" width="13" height="28" fill="#d0d0d0"/><path d="M21.5 11.0l3 3-3 3-3-3z" fill="#444"/></svg>
<div style="left:3px;top:585px;width:36px;height:36px;background:#5285a6;"></div>
<svg style="left:7px;top:589px;" width="28" height="28" viewBox="0 0 28 28"><rect x="0.5" y="0.5" width="27" height="27" fill="none" stroke="#d8d8d8"/><rect x="2.5" y="2.5" width="23" height="23" fill="none" stroke="#d8d8d8" stroke-width="0.8"/><path d="M6 6h10M9 6v14M9 11h12M9 15h8M9 20h10" stroke="#d8d8d8" stroke-width="1.2"/><rect x="5" y="5" width="3" height="3" fill="#d8d8d8"/><rect x="10" y="10" width="3" height="3" fill="#d8d8d8"/><rect x="10" y="14" width="3" height="3" fill="#d8d8d8"/><rect x="10" y="19" width="3" height="3" fill="#d8d8d8"/></svg>
<div style="left:3px;top:626px;width:36px;height:2px;background:#8a8a8a;"></div>
<svg style="left:9px;top:640px;" width="24" height="24" viewBox="0 0 24 24"><circle cx="9" cy="9" r="7.5" fill="none" stroke="#d8d8d8" stroke-width="2"/><path d="M14.5 14.5L22 22" stroke="#d8d8d8" stroke-width="2.5"/></svg>
<svg style="left:5px;top:900px;" width="32" height="36" viewBox="0 0 32 36"><path d="M1.1 5.1L6.1 2V24L1.1 26.8z" fill="#86c8e2"/><rect x="4.2" y="23" width="26.2" height="10.6" rx="1.5" fill="#2f6c87"/><path d="M28 4L30.4 5V33H28z" fill="#2a6580"/><rect x="6.1" y="2" width="22.4" height="22" rx="1" fill="#3aa5cf"/><text x="17.3" y="19.8" font-size="16" font-weight="bold" text-anchor="middle" fill="#f4fbff" font-family="Liberation Sans">M</text><text x="17" y="31.3" font-size="6.8" font-weight="bold" text-anchor="middle" fill="#f0f6fa" font-family="Liberation Sans">AYA</text></svg>
<div style="left:43px;top:155px;width:4px;height:785px;background:#383838;"></div>
<div style="left:47px;top:157.5px;width:64px;height:16px;background:#444;border-radius:3px 3px 0 0"></div>
<span class="t" style="left:57.4px;top:161.27px;font-size:11.5px;color:#d8d8d8;">Outliner</span>
<div style="left:47px;top:173.5px;width:260px;height:765px;background:#444;box-shadow:inset 0 0 0 1px #8a8a8a"></div>
<div style="left:48px;top:174.5px;width:258px;height:763px;background:#444;"></div>
<span class="t" style="left:56.5px;top:178.77px;font-size:11.5px;color:#d8d8d8;">Display</span>
<span class="t" style="left:108.3px;top:178.77px;font-size:11.5px;color:#d8d8d8;">Show</span>
<span class="t" style="left:151.5px;top:178.77px;font-size:11.5px;color:#d8d8d8;">Help</span>
<div style="left:48px;top:197px;width:257px;height:23px;background:#404040;"></div>
<svg style="left:54px;top:200px;" width="15" height="16" viewBox="0 0 15 16"><path d="M3 0.5h9M3 15.5h9" stroke="#707070" stroke-dasharray="2 1"/><path d="M2.5 4v8M12.5 4v8" stroke="#707070" stroke-dasharray="2 1"/><path d="M0 1l5 2.5L0 6zM10 1l5 2.5L10 6zM0 10l5 2.5L0 15zM10 10l5 2.5L10 15z" fill="#6a6a6a"/></svg>
<div style="left:76px;top:200px;width:228px;height:18px;background:#2b2b2b;border-radius:3px"></div>
<span class="t" style="left:79.4px;top:204.77px;font-size:11.5px;color:#8a8a8a;">Search...</span>
<svg style="left:290px;top:205px;" width="10" height="6" viewBox="0 0 10 6"><path d="M0 0h10L5 6z" fill="#c8c8c8"/></svg>
<div style="left:48px;top:220px;width:257px;height:710px;background:#383838;"></div>
<svg style="left:85px;top:225.0px;" width="15" height="10" viewBox="0 0 15 10"><rect x="0" y="1" width="9" height="7" fill="#c8c8c8"/><path d="M10 4.5L14 0v9z" fill="#c8c8c8"/></svg>
<span class="t" style="left:103.7px;top:224.40px;font-size:11.7px;color:#7a7a7a;">persp</span>
<svg style="left:85px;top:245.0px;" width="15" height="10" viewBox="0 0 15 10"><rect x="0" y="1" width="9" height="7" fill="#c8c8c8"/><path d="M10 4.5L14 0v9z" fill="#c8c8c8"/></svg>
<span class="t" style="left:103.7px;top:244.40px;font-size:11.7px;color:#7a7a7a;">top</span>
<svg style="left:85px;top:265.0px;" width="15" height="10" viewBox="0 0 15 10"><rect x="0" y="1" width="9" height="7" fill="#c8c8c8"/><path d="M10 4.5L14 0v9z" fill="#c8c8c8"/></svg>
<span class="t" style="left:103.7px;top:264.40px;font-size:11.7px;color:#7a7a7a;">front</span>
<svg style="left:85px;top:285.0px;" width="15" height="10" viewBox="0 0 15 10"><rect x="0" y="1" width="9" height="7" fill="#c8c8c8"/><path d="M10 4.5L14 0v9z" fill="#c8c8c8"/></svg>
<span class="t" style="left:103.7px;top:284.40px;font-size:11.7px;color:#7a7a7a;">side</span>
<svg style="left:84px;top:302px;" width="16" height="16" viewBox="0 0 16 16"><circle cx="8" cy="8" r="7.3" fill="none" stroke="#c8c8c8" stroke-width="1.2"/><rect x="7" y="4" width="5" height="6" fill="#52b3c2"/><circle cx="6" cy="10" r="3" fill="#d0d0d0"/></svg>
<span class="t" style="left:103.7px;top:304.30px;font-size:11.7px;color:#d0d0d0;">defaultLightSet</span>
<svg style="left:84px;top:322px;" width="16" height="16" viewBox="0 0 16 16"><circle cx="8" cy="8" r="7.3" fill="none" stroke="#c8c8c8" stroke-width="1.2"/><rect x="7" y="4" width="5" height="6" fill="#52b3c2"/><circle cx="6" cy="10" r="3" fill="#d0d0d0"/></svg>
<span class="t" style="left:103.7px;top:324.30px;font-size:11.7px;color:#d0d0d0;">defaultObjectSet</span>
<svg style="left:295px;top:223px;" width="10" height="6" viewBox="0 0 10 6"><path d="M0 6L5 0L10 6z" fill="#c8c8c8"/></svg>
<div style="left:295px;top:233px;width:10px;height:672px;background:#5a5a5a;border-radius:5px"></div>
<svg style="left:295px;top:909px;" width="10" height="6" viewBox="0 0 10 6"><path d="M0 0h10L5 6z" fill="#c8c8c8"/></svg>
<div style="left:48px;top:918px;width:257px;height:13px;background:#383838;"></div>
<svg style="left:51.6px;top:920px;" width="6" height="10" viewBox="0 0 6 10"><path d="M6 0v10L0 5z" fill="#c8c8c8"/></svg>
<div style="left:61.5px;top:920px;width:219px;height:10px;background:#5a5a5a;border-radius:5px"></div>
<svg style="left:284px;top:920px;" width="6" height="10" viewBox="0 0 6 10"><path d="M0 0v10L6 5z" fill="#c8c8c8"/></svg>
<div style="left:48px;top:930px;width:257px;height:7px;background:#444;"></div>
<svg style="left:134px;top:932px;" width="85" height="3" viewBox="0 0 85 3"><rect x="0" y="0" width="1" height="1" fill="#666"/><rect x="3" y="0" width="1" height="1" fill="#666"/><rect x="6" y="0" width="1" height="1" fill="#666"/><rect x="9" y="0" width="1" height="1" fill="#666"/><rect x="12" y="0" width="1" height="1" fill="#666"/><rect x="15" y="0" width="1" height="1" fill="#666"/><rect x="18" y="0" width="1" height="1" fill="#666"/><rect x="21" y="0" width="1" height="1" fill="#666"/><rect x="24" y="0" width="1" height="1" fill="#666"/><rect x="27" y="0" width="1" height="1" fill="#666"/><rect x="30" y="0" width="1" height="1" fill="#666"/><rect x="33" y="0" width="1" height="1" fill="#666"/><rect x="36" y="0" width="1" height="1" fill="#666"/><rect x="39" y="0" width="1" height="1" fill="#666"/><rect x="42" y="0" width="1" height="1" fill="#666"/><rect x="45" y="0" width="1" height="1" fill="#666"/><rect x="48" y="0" width="1" height="1" fill="#666"/><rect x="51" y="0" width="1" height="1" fill="#666"/><rect x="54" y="0" width="1" height="1" fill="#666"/><rect x="57" y="0" width="1" height="1" fill="#666"/><rect x="60" y="0" width="1" height="1" fill="#666"/><rect x="63" y="0" width="1" height="1" fill="#666"/><rect x="66" y="0" width="1" height="1" fill="#666"/><rect x="69" y="0" width="1" height="1" fill="#666"/><rect x="72" y="0" width="1" height="1" fill="#666"/><rect x="75" y="0" width="1" height="1" fill="#666"/><rect x="78" y="0" width="1" height="1" fill="#666"/><rect x="81" y="0" width="1" height="1" fill="#666"/><rect x="84" y="0" width="1" height="1" fill="#666"/></svg>
<div style="left:308px;top:155px;width:3px;height:785px;background:#383838;"></div>
<div style="left:311px;top:155px;width:861px;height:785px;background:#444;"></div>
<span class="t" style="left:323.4px;top:162.77px;font-size:11.5px;color:#d6d6d6;">View</span>
<span class="t" style="left:363.1px;top:162.77px;font-size:11.5px;color:#d6d6d6;">Shading</span>
<span class="t" style="left:421.4px;top:162.77px;font-size:11.5px;color:#d6d6d6;">Lighting</span>
<span class="t" style="left:479.7px;top:162.77px;font-size:11.5px;color:#d6d6d6;">Show</span>
<span class="t" style="left:523.7px;top:162.77px;font-size:11.5px;color:#d6d6d6;">Renderer</span>
<span class="t" style="left:585.3px;top:162.77px;font-size:11.5px;color:#d6d6d6;">Panels</span>
<svg style="left:317.7px;top:179px;" width="3" height="16" viewBox="0 0 3 16"><rect x="1" y="0" width="1" height="16" fill="#8c8c8c"/><rect x="0" y="4.0" width="3" height="8.0" fill="#8c8c8c"/></svg>
<svg style="left:327.5px;top:183px;" width="15" height="8" viewBox="0 0 15 8"><rect x="0" y="0.5" width="10" height="7.5" rx="1" fill="#d0d0d0"/><path d="M10.5 4L15 0v8z" fill="#d0d0d0"/></svg>
<svg style="left:346px;top:181px;" width="15" height="13" viewBox="0 0 15 13"><rect x="2" y="2" width="9" height="7" fill="#d0d0d0"/><path d="M11 5L15 1v8z" fill="#d0d0d0"/><rect x="0" y="7" width="7" height="6" fill="#52b3c2"/><path d="M1.5 7V5a2 2 0 0 1 4 0v2" fill="none" stroke="#52b3c2" stroke-width="1.3"/></svg>
<svg style="left:365.4px;top:181px;" width="15" height="13" viewBox="0 0 15 13"><rect x="2" y="2" width="9" height="7" fill="#d0d0d0"/><path d="M11 5L15 1v8z" fill="#d0d0d0"/><circle cx="4" cy="9" r="3.6" fill="#52b3c2"/><circle cx="4" cy="9" r="1.3" fill="#444"/></svg>
<svg style="left:388.6px;top:181px;" width="7" height="13" viewBox="0 0 7 13"><path d="M0 0h7v13L3.5 9.5L0 13z" fill="#d0d0d0"/></svg>
<svg style="left:404px;top:180px;" width="14" height="14" viewBox="0 0 14 14"><path d="M3 12L8 1v9z" fill="#52b3c2"/><path d="M8 2l5 3v8L8 10z" fill="#d0d0d0"/><path d="M0 13h14M2 11h11" stroke="#d0d0d0" stroke-width="0.8"/></svg>
<svg style="left:422.7px;top:180px;" width="15" height="15" viewBox="0 0 15 15"><path d="M5 0v9M1 4.5h9M5 0l-2 2M5 0l2 2M1 4.5l2-2M1 4.5l2 2" stroke="#d0d0d0" stroke-width="1.1" fill="none"/><circle cx="10" cy="9" r="3.5" fill="none" stroke="#52b3c2" stroke-width="1.6"/><path d="M7.5 11.5L4 15" stroke="#52b3c2" stroke-width="2"/></svg>
<svg style="left:442.4px;top:180px;" width="13" height="14" viewBox="0 0 13 14"><path d="M1 13l1-4 9-9 2 2-9 9z" fill="#52b3c2"/></svg>
<svg style="left:461.5px;top:179px;" width="3" height="16" viewBox="0 0 3 16"><rect x="1" y="0" width="1" height="16" fill="#8c8c8c"/><rect x="0" y="4.0" width="3" height="8.0" fill="#8c8c8c"/></svg>
<div style="left:469.7px;top:177.7px;width:18.2px;height:18px;background:#5285a6;"></div>
<svg style="left:472px;top:180px;" width="13" height="13" viewBox="0 0 13 13"><rect x="0.5" y="0.5" width="12" height="12" fill="none" stroke="#d0d0d0"/><path d="M4.5 0.5v12M8.5 0.5v12M0.5 4.5h12M0.5 8.5h12" stroke="#d0d0d0"/></svg>
<svg style="left:490.4px;top:181.8px;" width="15" height="11" viewBox="0 0 15 11"><rect x="0.5" y="0.5" width="14" height="10" fill="none" stroke="#d0d0d0"/><path d="M0.5 2.5h14M0.5 8.5h14" stroke="#d0d0d0" stroke-dasharray="1 1"/></svg>
<svg style="left:509.6px;top:181.8px;" width="15" height="11" viewBox="0 0 15 11"><rect x="0.5" y="0.5" width="14" height="10" fill="none" stroke="#d0d0d0"/><circle cx="7.5" cy="5.5" r="2.7" fill="#52b3c2"/></svg>
<div style="left:527.6px;top:177.7px;width:17px;height:18px;background:#3a3a3a;"></div>
<svg style="left:531px;top:182px;" width="10" height="10" viewBox="0 0 10 10"><circle cx="5" cy="5" r="4.5" fill="#555"/></svg>
<svg style="left:547.9px;top:181.8px;" width="15" height="11" viewBox="0 0 15 11"><rect x="0.5" y="0.5" width="14" height="10" fill="none" stroke="#d0d0d0" stroke-dasharray="3 1"/><path d="M7.5 0v11M0 5.5h15" stroke="#52b3c2" stroke-dasharray="1 1"/></svg>
<svg style="left:566.5px;top:181.8px;" width="15" height="11" viewBox="0 0 15 11"><rect x="0.5" y="0.5" width="14" height="10" fill="none" stroke="#d0d0d0"/><path d="M2 9l3-5 3 5z" fill="#52b3c2"/><circle cx="10" cy="4" r="2" fill="#d0d0d0"/></svg>
<svg style="left:585.5px;top:181.8px;" width="15" height="11" viewBox="0 0 15 11"><rect x="0.5" y="0.5" width="14" height="10" fill="none" stroke="#d0d0d0"/><path d="M4 3h7M7.5 3v6M6 9h3" stroke="#52b3c2" stroke-width="1.6"/></svg>
<svg style="left:606.0px;top:179px;" width="3" height="16" viewBox="0 0 3 16"><rect x="1" y="0" width="1" height="16" fill="#8c8c8c"/><rect x="0" y="4.0" width="3" height="8.0" fill="#8c8c8c"/></svg>
<svg style="left:616.4px;top:181px;" width="14" height="14" viewBox="0 0 14 14"><path d="M7 0.5l6 3v7l-6 3-6-3v-7z M1 3.5l6 3 6-3M7 6.5v7" fill="none" stroke="#d0d0d0" stroke-width="1"/></svg>
<div style="left:633px;top:177.7px;width:18px;height:18px;background:#5285a6;"></div>
<svg style="left:635px;top:180px;" width="14" height="14" viewBox="0 0 14 14"><path d="M7 0.5l6 3v7l-6 3-6-3v-7z" fill="#6cc8d8" stroke="#2a3a40" stroke-width="0.8"/><path d="M1 3.5l6 3 6-3M7 6.5v7" fill="none" stroke="#2a3a40" stroke-width="0.8"/></svg>
<svg style="left:654.7px;top:181px;" width="13" height="13" viewBox="0 0 13 13"><circle cx="6.5" cy="6.5" r="6" fill="#d0d0d0"/><path d="M6.5 0.5a6 6 0 0 1 0 12z" fill="#666"/><path d="M7 2h2M8 4h2M7 6h3M8 8h2M7 10h2" stroke="#d0d0d0" stroke-dasharray="1 1"/></svg>
<svg style="left:673.7px;top:181px;" width="14" height="14" viewBox="0 0 14 14"><path d="M7 0.5l6 3v7l-6 3-6-3v-7z" fill="#52b3c2" stroke="#d0d0d0" stroke-width="1.2"/><path d="M1 3.5l6 3 6-3M7 6.5v7" fill="none" stroke="#d0d0d0" stroke-width="1"/></svg>
<svg style="left:693px;top:181px;" width="13" height="13" viewBox="0 0 13 13"><defs><pattern id="chk" width="2" height="2" patternUnits="userSpaceOnUse"><rect width="1" height="1" fill="#e0e0e0"/><rect x="1" y="1" width="1" height="1" fill="#e0e0e0"/></pattern></defs><circle cx="6.5" cy="6.5" r="6.3" fill="url(#chk)"/></svg>
<svg style="left:710.5px;top:180px;" width="15" height="15" viewBox="0 0 15 15"><circle cx="7.5" cy="6" r="3.6" fill="#d0d0d0"/><rect x="6" y="9" width="3" height="4" fill="#d0d0d0"/><path d="M7.5 0v1M1 6h2M12 6h2M2.5 1.5l1.5 1.5M12.5 1.5L11 3" stroke="#d0d0d0"/></svg>
<svg style="left:729px;top:181px;" width="16" height="13" viewBox="0 0 16 13"><circle cx="10" cy="6" r="5.5" fill="#52b3c2"/><path d="M1 9l5 3M2 7l5 3M0 11l4 2" stroke="#d0d0d0" stroke-width="0.9"/></svg>
<svg style="left:750.0px;top:179px;" width="3" height="16" viewBox="0 0 3 16"><rect x="1" y="0" width="1" height="16" fill="#8c8c8c"/><rect x="0" y="4.0" width="3" height="8.0" fill="#8c8c8c"/></svg>
<svg style="left:760.2px;top:180px;" width="14" height="15" viewBox="0 0 14 15"><circle cx="7" cy="6" r="5.5" fill="#d0d0d0"/><path d="M1 10l6 4 6-4M3 12l4 3" stroke="#52b3c2" stroke-width="1" fill="none"/></svg>
<svg style="left:778.8px;top:180px;" width="15" height="15" viewBox="0 0 15 15"><circle cx="5" cy="10" r="4.5" fill="#666"/><circle cx="10" cy="5" r="4.5" fill="#d0d0d0"/></svg>
<svg style="left:798.5px;top:180px;" width="14" height="15" viewBox="0 0 14 15"><path d="M7 1.5a6 6 0 0 0 0 12" fill="none" stroke="#52b3c2" stroke-width="2.5"/><path d="M7 1.5a6 6 0 0 1 0 12" fill="none" stroke="#d0d0d0" stroke-width="2.5" stroke-dasharray="1.5 1.5"/></svg>
<div style="left:815px;top:177.7px;width:17.6px;height:18px;background:#3a3a3a;box-shadow:inset 0 0 0 1px #333"></div>
<svg style="left:818px;top:181px;" width="12" height="12" viewBox="0 0 12 12"><rect x="0" y="0" width="8" height="8" fill="#4a4a4a"/><rect x="4" y="4" width="8" height="8" fill="#4f5a5c"/></svg>
<svg style="left:837.3px;top:179px;" width="3" height="16" viewBox="0 0 3 16"><rect x="1" y="0" width="1" height="16" fill="#8c8c8c"/><rect x="0" y="4.0" width="3" height="8.0" fill="#8c8c8c"/></svg>
<svg style="left:847px;top:180px;" width="14" height="15" viewBox="0 0 14 15"><rect x="0.5" y="0.5" width="9" height="9" fill="none" stroke="#52b3c2" stroke-dasharray="2 1.3"/><path d="M6 6l7 5h-3l2 3-1.5 1-2-3-2 2z" fill="#d0d0d0"/></svg>
<svg style="left:866.7px;top:179px;" width="3" height="16" viewBox="0 0 3 16"><rect x="1" y="0" width="1" height="16" fill="#8c8c8c"/><rect x="0" y="4.0" width="3" height="8.0" fill="#8c8c8c"/></svg>
<div style="left:874px;top:177.7px;width:18.6px;height:18px;background:#3a3a3a;"></div>
<svg style="left:876px;top:180px;" width="14" height="14" viewBox="0 0 14 14"><rect x="4.5" y="0.5" width="9" height="9" fill="none" stroke="#d0d0d0" stroke-width="1.3"/><rect x="0.5" y="4.5" width="9" height="9" fill="#d0d0d0"/></svg>
<div style="left:893.5px;top:177.7px;width:17px;height:18px;background:#3a3a3a;"></div>
<svg style="left:895px;top:180px;" width="14" height="14" viewBox="0 0 14 14"><rect x="4.5" y="0.5" width="9" height="9" fill="none" stroke="#d0d0d0" stroke-width="1.3"/><rect x="0.5" y="4.5" width="9" height="9" fill="#d0d0d0"/></svg>
<div style="left:914.2px;top:177.7px;width:15.2px;height:18px;background:#3a3a3a;"></div>
<svg style="left:915px;top:180px;" width="14" height="14" viewBox="0 0 14 14"><rect x="0.5" y="0.5" width="13" height="13" fill="none" stroke="#d0d0d0"/><path d="M3 3l8 8" stroke="#d0d0d0" stroke-width="1.2"/><circle cx="9" cy="9" r="2" fill="#d0d0d0"/></svg>
<svg style="left:934.9px;top:179px;" width="3" height="16" viewBox="0 0 3 16"><rect x="1" y="0" width="1" height="16" fill="#8c8c8c"/><rect x="0" y="4.0" width="3" height="8.0" fill="#8c8c8c"/></svg>
<svg style="left:946.5px;top:180px;" width="13" height="13" viewBox="0 0 13 13"><circle cx="6.5" cy="6.5" r="6.3" fill="#d0d0d0"/><path d="M6.5 6.5L6.5 0.5" stroke="#444" stroke-width="1.2" transform="rotate(0 6.5 6.5) translate(2 1)"/><path d="M6.5 6.5L6.5 0.5" stroke="#444" stroke-width="1.2" transform="rotate(60 6.5 6.5) translate(2 1)"/><path d="M6.5 6.5L6.5 0.5" stroke="#444" stroke-width="1.2" transform="rotate(120 6.5 6.5) translate(2 1)"/><path d="M6.5 6.5L6.5 0.5" stroke="#444" stroke-width="1.2" transform="rotate(180 6.5 6.5) translate(2 1)"/><path d="M6.5 6.5L6.5 0.5" stroke="#444" stroke-width="1.2" transform="rotate(240 6.5 6.5) translate(2 1)"/><path d="M6.5 6.5L6.5 0.5" stroke="#444" stroke-width="1.2" transform="rotate(300 6.5 6.5) translate(2 1)"/><circle cx="6.5" cy="6.5" r="2.3" fill="#444"/></svg>
<div style="left:964px;top:179.4px;width:37.5px;height:13.6px;background:#2b2b2b;border-radius:3px"></div>
<span class="t" style="left:969.2px;top:181.77px;font-size:11.5px;color:#d8d8d8;">0.00</span>
<svg style="left:1008.5px;top:180px;" width="11" height="13" viewBox="0 0 11 13"><path d="M5 0.5h5.5v12H5z" fill="#d0d0d0"/><path d="M5 2a4.5 4.5 0 0 0 0 9z" fill="#d0d0d0"/></svg>
<div style="left:1025.2px;top:179.4px;width:37.5px;height:13.6px;background:#2b2b2b;border-radius:3px"></div>
<span class="t" style="left:1030px;top:181.77px;font-size:11.5px;color:#d8d8d8;">1.00</span>
<div style="left:1066px;top:178px;width:17.6px;height:18px;background:#5285a6;"></div>
<svg style="left:1067px;top:179px;" width="16" height="16" viewBox="0 0 16 16"><circle cx="8" cy="8" r="6.8" fill="#52b3c2" stroke="#2f4a55" stroke-width="1.2"/><text x="8" y="10.5" font-size="6.2" font-weight="bold" text-anchor="middle" fill="#1f3a44" font-family="Liberation Sans">ON</text></svg>
<div style="left:1087.4px;top:178.3px;width:80.4px;height:16.7px;background:#5b5b5b;"></div>
<span class="t" style="left:1089.6px;top:182.69px;font-size:11px;color:#d8d8d8;letter-spacing:-0.45px">ACES 1.0 SDR-v</span>
<svg style="left:315px;top:197px;background:#5d5d5d" width="853" height="739" viewBox="0 0 853 739"><path d="M426.95 269.90L148.63 369.90M426.95 269.90L705.27 369.90M435.97 273.14L156.87 375.38M417.93 273.14L697.03 375.38M445.16 276.45L165.31 381.00M408.74 276.45L688.59 381.00M454.53 279.82L173.98 386.76M399.37 279.82L679.92 386.76M464.10 283.25L182.87 392.67M389.80 283.25L671.03 392.67M473.85 286.75L192.00 398.75M380.05 286.75L661.90 398.75M483.80 290.33L201.37 404.98M370.10 290.33L652.53 404.98M493.96 293.98L211.00 411.38M359.94 293.98L642.90 411.38M504.32 297.70L220.90 417.97M349.58 297.70L633.00 417.97M514.91 301.51L231.07 424.73M338.99 301.51L622.83 424.73M525.72 305.39L241.53 431.69M328.18 305.39L612.37 431.69M536.76 309.36L252.30 438.85M317.14 309.36L601.60 438.85M559.56 317.55L274.78 453.80M294.34 317.55L579.12 453.80M571.34 321.78L286.53 461.62M282.56 321.78L567.37 461.62M583.39 326.11L298.64 469.67M270.51 326.11L555.26 469.67M595.70 330.53L311.12 477.97M258.20 330.53L542.78 477.97M608.30 335.06L324.00 486.54M245.60 335.06L529.90 486.54M621.19 339.69L337.30 495.38M232.71 339.69L516.60 495.38M634.39 344.43L351.02 504.51M219.51 344.43L502.88 504.51M647.89 349.28L365.20 513.94M206.01 349.28L488.70 513.94M661.72 354.25L379.86 523.69M192.18 354.25L474.04 523.69M675.88 359.34L395.02 533.77M178.02 359.34L458.88 533.77M690.40 364.56L410.71 544.21M163.50 364.56L443.19 544.21M705.27 369.90L426.95 555.01M148.63 369.90L426.95 555.01" stroke="#424242" stroke-width="1" fill="none" shape-rendering="crispEdges"/><path d="M548.04 313.41L263.37 446.22M305.86 313.41L590.53 446.22" stroke="#3a3a3a" stroke-width="2" fill="none" shape-rendering="crispEdges"/></svg>
<svg style="left:1070px;top:215px;" width="80" height="80" viewBox="0 0 80 80"><defs><linearGradient id="gl" x1="0" y1="0" x2="1" y2="1"><stop offset="0" stop-color="#b4b4b4"/><stop offset="1" stop-color="#a2a2a2"/></linearGradient></defs><polygon points="40.7,8.7 73.2,18.5 40.7,32.4 8.3,18.9" fill="#b8b8b8"/><polygon points="8.3,18.9 40.7,32.4 40.7,76.2 10.6,57.3" fill="url(#gl)"/><polygon points="40.7,32.4 73.2,18.5 70.5,57.3 40.7,76.2" fill="#adadad"/><polygon points="40.7,8.7 73.2,18.5 70.5,57.3 40.7,76.2 10.6,57.3 8.3,18.9" fill="none" stroke="#7c7c7c" stroke-width="1.2"/><polyline points="8.3,18.9 40.7,32.4 73.2,18.5" fill="none" stroke="#7c7c7c" stroke-width="1.8"/><polyline points="40.7,32.4 40.7,76.2" fill="none" stroke="#7c7c7c" stroke-width="1.8"/><text x="0" y="0" font-size="6.5" font-weight="bold" fill="#6a6a6a" font-family="Liberation Sans" transform="translate(12.5 43) rotate(28) scale(1.05 0.95)">FRONT</text><text x="0" y="0" font-size="6.5" font-weight="bold" fill="#6a6a6a" font-family="Liberation Sans" transform="translate(46.5 56.5) rotate(-30) scale(1.05 1)">RIGHT</text><text x="0" y="0" font-size="5" font-weight="bold" fill="#8a8a8a" font-family="Liberation Sans" transform="translate(34 15) rotate(15) scale(1.3 0.6)">TOP</text></svg>
<svg style="left:325px;top:886px;" width="32" height="32" viewBox="0 0 32 32"><path d="M15.6 24.1V12.2" stroke="#5ccc5c" stroke-width="1.3"/><path d="M15.6 24.1L7.3 28.3" stroke="#1a1ab0" stroke-width="1.2"/><path d="M15.6 24.1L23.8 27.5" stroke="#c02020" stroke-width="1.2"/><text x="15.5" y="10" font-size="9" text-anchor="middle" fill="#44c044" font-family="Liberation Sans" font-weight="bold">y</text><text x="4.5" y="28.5" font-size="8.5" text-anchor="middle" fill="#2020d0" font-family="Liberation Sans" font-weight="bold">z</text><text x="26.2" y="29" font-size="8.5" text-anchor="middle" fill="#d02828" font-family="Liberation Sans" font-weight="bold">x</text></svg>
<span class="t" style="left:723.4px;top:917.19px;font-size:11px;color:#e8e8e8;font-weight:bold">persp</span>
<div style="left:1172px;top:155px;width:2px;height:785px;background:#383838;"></div>
<div style="left:1174px;top:155px;width:263px;height:785px;background:#444;"></div>
<svg style="left:1375px;top:159.5px;" width="14" height="14" viewBox="0 0 14 14"><path d="M7 5v5M7 10L2 12M7 10l5 2" stroke="#d0d0d0" stroke-width="1.3"/><path d="M7 0l3.5 4.5h-7z" fill="#5cbf5c"/><path d="M0 14l2-5 3 4z" fill="#4a7ad0"/><path d="M14 14l-2-5-3 4z" fill="#d04a4a"/><circle cx="7" cy="10" r="1.5" fill="#d0d0d0"/></svg>
<svg style="left:1395.4px;top:159.5px;" width="15.5" height="14" viewBox="0 0 15.5 14"><path d="M3.92 10.78A5.2 5.2 0 1 1 12.49 8.88" fill="none" stroke="#52b3c2" stroke-width="4.2"/><path d="M12.49 8.88A5.2 5.2 0 0 1 10.2 11.6" fill="none" stroke="#8a8a8a" stroke-width="4.2"/><circle cx="7.6" cy="7.4" r="1.6" fill="#52b3c2" stroke="#2a3a40" stroke-width="0.8"/></svg>
<svg style="left:1417.5px;top:159.5px;" width="14" height="14" viewBox="0 0 14 14"><path d="M0.5 0v13.5H14" fill="none" stroke="#8a8a8a"/><path d="M3 11L12 2" stroke="#52b3c2" stroke-width="1.6"/><path d="M8 1h5v5z" fill="#52b3c2"/></svg>
<span class="t" style="left:1186.7px;top:182.57px;font-size:11.5px;color:#d6d6d6;">Channels</span>
<span class="t" style="left:1249px;top:182.57px;font-size:11.5px;color:#d6d6d6;">Edit</span>
<span class="t" style="left:1284.2px;top:182.57px;font-size:11.5px;color:#d6d6d6;">Object</span>
<span class="t" style="left:1333px;top:182.57px;font-size:11.5px;color:#d6d6d6;">Show</span>
<span class="t" style="left:1186px;width:240px;text-align:center;top:349.74px;font-size:10.7px;font-weight:bold;color:#c8c8c8">Select objects in the scene to view,</span>
<span class="t" style="left:1186px;width:240px;text-align:center;top:362.74px;font-size:10.7px;font-weight:bold;color:#c8c8c8">edit and set keyframes on channels</span>
<span class="t" style="left:1186px;width:240px;text-align:center;top:375.74px;font-size:10.7px;font-weight:bold;color:#c8c8c8">(attributes)</span>
<svg style="left:1263px;top:539px;" width="85" height="3" viewBox="0 0 85 3"><rect x="0" y="0" width="1" height="1" fill="#7a7a7a"/><rect x="3" y="0" width="1" height="1" fill="#7a7a7a"/><rect x="6" y="0" width="1" height="1" fill="#7a7a7a"/><rect x="9" y="0" width="1" height="1" fill="#7a7a7a"/><rect x="12" y="0" width="1" height="1" fill="#7a7a7a"/><rect x="15" y="0" width="1" height="1" fill="#7a7a7a"/><rect x="18" y="0" width="1" height="1" fill="#7a7a7a"/><rect x="21" y="0" width="1" height="1" fill="#7a7a7a"/><rect x="24" y="0" width="1" height="1" fill="#7a7a7a"/><rect x="27" y="0" width="1" height="1" fill="#7a7a7a"/><rect x="30" y="0" width="1" height="1" fill="#7a7a7a"/><rect x="33" y="0" width="1" height="1" fill="#7a7a7a"/><rect x="36" y="0" width="1" height="1" fill="#7a7a7a"/><rect x="39" y="0" width="1" height="1" fill="#7a7a7a"/><rect x="42" y="0" width="1" height="1" fill="#7a7a7a"/><rect x="45" y="0" width="1" height="1" fill="#7a7a7a"/><rect x="48" y="0" width="1" height="1" fill="#7a7a7a"/><rect x="51" y="0" width="1" height="1" fill="#7a7a7a"/><rect x="54" y="0" width="1" height="1" fill="#7a7a7a"/><rect x="57" y="0" width="1" height="1" fill="#7a7a7a"/><rect x="60" y="0" width="1" height="1" fill="#7a7a7a"/><rect x="63" y="0" width="1" height="1" fill="#7a7a7a"/><rect x="66" y="0" width="1" height="1" fill="#7a7a7a"/><rect x="69" y="0" width="1" height="1" fill="#7a7a7a"/><rect x="72" y="0" width="1" height="1" fill="#7a7a7a"/><rect x="75" y="0" width="1" height="1" fill="#7a7a7a"/><rect x="78" y="0" width="1" height="1" fill="#7a7a7a"/><rect x="81" y="0" width="1" height="1" fill="#7a7a7a"/><rect x="84" y="0" width="1" height="1" fill="#7a7a7a"/></svg>
<div style="left:1178.5px;top:549.3px;width:255px;height:17px;background:#383838;"></div>
<div style="left:1179.8px;top:550.5px;width:58px;height:16px;background:#444;border-radius:3px 3px 0 0"></div>
<div style="left:1240.5px;top:550.5px;width:47px;height:16px;background:#3a3a3a;border-radius:3px 3px 0 0;box-shadow:inset 0 0 0 1px #333"></div>
<span class="t" style="left:1190.3px;top:555.27px;font-size:11.5px;color:#d8d8d8;">Display</span>
<span class="t" style="left:1251px;top:555.27px;font-size:11.5px;color:#8a8a8a;">Anim</span>
<div style="left:1178px;top:566px;width:256px;height:370px;background:#444;box-shadow:inset 0 0 0 1px #2e2e2e"></div>
<span class="t" style="left:1189px;top:573.27px;font-size:11.5px;color:#d6d6d6;">Layers</span>
<span class="t" style="left:1235.2px;top:573.27px;font-size:11.5px;color:#d6d6d6;">Options</span>
<span class="t" style="left:1292px;top:573.27px;font-size:11.5px;color:#d6d6d6;">Help</span>
<svg style="left:1336.2px;top:592px;" width="17" height="14" viewBox="0 0 17 14"><path d="M0.2 7.7L6.8 3.3L13.6 7.7L6.8 12.1z" fill="#c8c8c8"/><path d="M11.75 2.8L15.3 6.7H13.5V11.2H10V6.7H8.2z" fill="#52b3c2" stroke="#263840" stroke-width="0.9"/></svg>
<svg style="left:1359px;top:592px;" width="17" height="14" viewBox="0 0 17 14"><path d="M0.2 7.7L6.8 3.3L13.6 7.7L6.8 12.1z" fill="#c8c8c8"/><path d="M11.7 11.9L15.3 8H13.5V3.3H10V8H8.1z" fill="#52b3c2" stroke="#263840" stroke-width="0.9"/></svg>
<svg style="left:1386.2px;top:592px;" width="17" height="14" viewBox="0 0 17 14"><path d="M0.2 7.7L6.8 3.3L13.6 7.7L6.8 12.1z" fill="#c8c8c8"/><path d="M11 0.6h2.2v2.2h2.2v2.2h-2.2v2.2H11V5H8.8V2.8H11z" fill="#52b3c2" stroke="#263840" stroke-width="0.8"/></svg>
<svg style="left:1410px;top:592px;" width="17" height="14" viewBox="0 0 17 14"><path d="M0.2 7.7L6.8 3.3L13.6 7.7L6.8 12.1z" fill="#c8c8c8"/><circle cx="10" cy="4.3" r="3.1" fill="#52b3c2" stroke="#263840" stroke-width="0.9"/></svg>
<div style="left:1182px;top:614px;width:246.6px;height:306px;background:#2b2b2b;"></div>
<div style="left:1182px;top:920px;width:246.6px;height:12px;background:#383838;"></div>
<svg style="left:1185px;top:921px;" width="6" height="10" viewBox="0 0 6 10"><path d="M6 0v10L0 5z" fill="#c8c8c8"/></svg>
<div style="left:1194.4px;top:921px;width:155px;height:9.6px;background:#5e5e5e;border-radius:5px"></div>
<svg style="left:1419.4px;top:921px;" width="6" height="10" viewBox="0 0 6 10"><path d="M0 0v10L6 5z" fill="#c8c8c8"/></svg>
<div style="left:1437px;top:155px;width:13px;height:785px;background:#383838;"></div>
<div style="left:1437px;top:155px;width:13px;height:157px;background:#444;"></div>
<div style="left:1437px;top:313px;width:13px;height:1px;background:#2e2e2e;"></div>
<div style="left:1437px;top:418px;width:13px;height:1px;background:#2e2e2e;"></div>
<div style="left:1437px;top:527px;width:13px;height:1px;background:#2e2e2e;"></div>
<span class="t" style="left:1449px;top:167px;font-size:11.3px;color:#dcdcdc;transform-origin:0 0;transform:rotate(90deg)">Channel Box / Layer Editor</span>
<span class="t" style="left:1449px;top:325px;font-size:11.3px;color:#8a8a8a;transform-origin:0 0;transform:rotate(90deg)">Attribute Editor</span>
<span class="t" style="left:1449px;top:430px;font-size:11.3px;color:#8a8a8a;transform-origin:0 0;transform:rotate(90deg)">Modeling Toolkit</span>
<div style="left:0px;top:940px;width:1450px;height:2px;background:#303030;"></div>
<div style="left:0px;top:942px;width:1450px;height:48px;background:#444;"></div>
<svg style="left:2px;top:945px;" width="4" height="42" viewBox="0 0 4 42"><rect x="0" y="0" width="1" height="1" fill="#6a6a6a"/><rect x="3" y="0" width="1" height="1" fill="#6a6a6a"/><rect x="0" y="3" width="1" height="1" fill="#6a6a6a"/><rect x="3" y="3" width="1" height="1" fill="#6a6a6a"/><rect x="0" y="6" width="1" height="1" fill="#6a6a6a"/><rect x="3" y="6" width="1" height="1" fill="#6a6a6a"/><rect x="0" y="9" width="1" height="1" fill="#6a6a6a"/><rect x="3" y="9" width="1" height="1" fill="#6a6a6a"/><rect x="0" y="12" width="1" height="1" fill="#6a6a6a"/><rect x="3" y="12" width="1" height="1" fill="#6a6a6a"/><rect x="0" y="15" width="1" height="1" fill="#6a6a6a"/><rect x="3" y="15" width="1" height="1" fill="#6a6a6a"/><rect x="0" y="18" width="1" height="1" fill="#6a6a6a"/><rect x="3" y="18" width="1" height="1" fill="#6a6a6a"/><rect x="0" y="21" width="1" height="1" fill="#6a6a6a"/><rect x="3" y="21" width="1" height="1" fill="#6a6a6a"/><rect x="0" y="24" width="1" height="1" fill="#6a6a6a"/><rect x="3" y="24" width="1" height="1" fill="#6a6a6a"/><rect x="0" y="27" width="1" height="1" fill="#6a6a6a"/><rect x="3" y="27" width="1" height="1" fill="#6a6a6a"/><rect x="0" y="30" width="1" height="1" fill="#6a6a6a"/><rect x="3" y="30" width="1" height="1" fill="#6a6a6a"/><rect x="0" y="33" width="1" height="1" fill="#6a6a6a"/><rect x="3" y="33" width="1" height="1" fill="#6a6a6a"/><rect x="0" y="36" width="1" height="1" fill="#6a6a6a"/><rect x="3" y="36" width="1" height="1" fill="#6a6a6a"/><rect x="0" y="39" width="1" height="1" fill="#6a6a6a"/><rect x="3" y="39" width="1" height="1" fill="#6a6a6a"/></svg>
<div style="left:15px;top:950px;width:1147px;height:32px;background:#2b2b2b;"></div>
<div style="left:15px;top:942px;width:1147px;height:8px;background:#454545;"></div>
<div style="left:15px;top:982px;width:1138px;height:2px;background:#555;"></div>
<div style="left:15px;top:984px;width:1147px;height:6px;background:#454545;"></div>
<div style="left:22.8px;top:942px;width:9.2px;height:8px;background:#5a5a5a;"></div>
<div style="left:22.8px;top:982px;width:9.2px;height:8px;background:#5a5a5a;"></div>
<div style="left:22.8px;top:950px;width:9.2px;height:32px;background:#3a3a3a;"></div>
<div style="left:61.0px;top:942px;width:1px;height:8px;background:#1e1e1e"></div>
<div style="left:61.0px;top:984px;width:1px;height:6px;background:#1e1e1e"></div>
<div style="left:61.0px;top:966px;width:1px;height:15px;background:#bdbdbd"></div>
<span class="t" style="left:67.1px;top:952.43px;font-size:11.3px;color:#c0c0c0;">5</span>
<div style="left:108.0px;top:942px;width:1px;height:8px;background:#1e1e1e"></div>
<div style="left:108.0px;top:984px;width:1px;height:6px;background:#1e1e1e"></div>
<div style="left:108.0px;top:966px;width:1px;height:15px;background:#bdbdbd"></div>
<span class="t" style="left:115.1px;top:952.43px;font-size:11.3px;color:#c0c0c0;">10</span>
<div style="left:155.0px;top:942px;width:1px;height:8px;background:#1e1e1e"></div>
<div style="left:155.0px;top:984px;width:1px;height:6px;background:#1e1e1e"></div>
<div style="left:155.0px;top:966px;width:1px;height:15px;background:#bdbdbd"></div>
<span class="t" style="left:162.1px;top:952.43px;font-size:11.3px;color:#c0c0c0;">15</span>
<div style="left:202.0px;top:942px;width:1px;height:8px;background:#1e1e1e"></div>
<div style="left:202.0px;top:984px;width:1px;height:6px;background:#1e1e1e"></div>
<div style="left:202.0px;top:966px;width:1px;height:15px;background:#bdbdbd"></div>
<span class="t" style="left:209.1px;top:952.43px;font-size:11.3px;color:#c0c0c0;">20</span>
<div style="left:249.0px;top:942px;width:1px;height:8px;background:#1e1e1e"></div>
<div style="left:249.0px;top:984px;width:1px;height:6px;background:#1e1e1e"></div>
<div style="left:249.0px;top:966px;width:1px;height:15px;background:#bdbdbd"></div>
<span class="t" style="left:256.1px;top:952.43px;font-size:11.3px;color:#c0c0c0;">25</span>
<div style="left:296.0px;top:942px;width:1px;height:8px;background:#1e1e1e"></div>
<div style="left:296.0px;top:984px;width:1px;height:6px;background:#1e1e1e"></div>
<div style="left:296.0px;top:966px;width:1px;height:15px;background:#bdbdbd"></div>
<span class="t" style="left:303.1px;top:952.43px;font-size:11.3px;color:#c0c0c0;">30</span>
<div style="left:343.0px;top:942px;width:1px;height:8px;background:#1e1e1e"></div>
<div style="left:343.0px;top:984px;width:1px;height:6px;background:#1e1e1e"></div>
<div style="left:343.0px;top:966px;width:1px;height:15px;background:#bdbdbd"></div>
<span class="t" style="left:350.1px;top:952.43px;font-size:11.3px;color:#c0c0c0;">35</span>
<div style="left:390.0px;top:942px;width:1px;height:8px;background:#1e1e1e"></div>
<div style="left:390.0px;top:984px;width:1px;height:6px;background:#1e1e1e"></div>
<div style="left:390.0px;top:966px;width:1px;height:15px;background:#bdbdbd"></div>
<span class="t" style="left:397.1px;top:952.43px;font-size:11.3px;color:#c0c0c0;">40</span>
<div style="left:437.0px;top:942px;width:1px;height:8px;background:#1e1e1e"></div>
<div style="left:437.0px;top:984px;width:1px;height:6px;background:#1e1e1e"></div>
<div style="left:437.0px;top:966px;width:1px;height:15px;background:#bdbdbd"></div>
<span class="t" style="left:444.1px;top:952.43px;font-size:11.3px;color:#c0c0c0;">45</span>
<div style="left:484.0px;top:942px;width:1px;height:8px;background:#1e1e1e"></div>
<div style="left:484.0px;top:984px;width:1px;height:6px;background:#1e1e1e"></div>
<div style="left:484.0px;top:966px;width:1px;height:15px;background:#bdbdbd"></div>
<span class="t" style="left:491.1px;top:952.43px;font-size:11.3px;color:#c0c0c0;">50</span>
<div style="left:531.0px;top:942px;width:1px;height:8px;background:#1e1e1e"></div>
<div style="left:531.0px;top:984px;width:1px;height:6px;background:#1e1e1e"></div>
<div style="left:531.0px;top:966px;width:1px;height:15px;background:#bdbdbd"></div>
<span class="t" style="left:538.1px;top:952.43px;font-size:11.3px;color:#c0c0c0;">55</span>
<div style="left:579.0px;top:942px;width:1px;height:8px;background:#1e1e1e"></div>
<div style="left:579.0px;top:984px;width:1px;height:6px;background:#1e1e1e"></div>
<div style="left:579.0px;top:966px;width:1px;height:15px;background:#bdbdbd"></div>
<span class="t" style="left:586.1px;top:952.43px;font-size:11.3px;color:#c0c0c0;">60</span>
<div style="left:626.0px;top:942px;width:1px;height:8px;background:#1e1e1e"></div>
<div style="left:626.0px;top:984px;width:1px;height:6px;background:#1e1e1e"></div>
<div style="left:626.0px;top:966px;width:1px;height:15px;background:#bdbdbd"></div>
<span class="t" style="left:633.1px;top:952.43px;font-size:11.3px;color:#c0c0c0;">65</span>
<div style="left:673.0px;top:942px;width:1px;height:8px;background:#1e1e1e"></div>
<div style="left:673.0px;top:984px;width:1px;height:6px;background:#1e1e1e"></div>
<div style="left:673.0px;top:966px;width:1px;height:15px;background:#bdbdbd"></div>
<span class="t" style="left:680.1px;top:952.43px;font-size:11.3px;color:#c0c0c0;">70</span>
<div style="left:720.0px;top:942px;width:1px;height:8px;background:#1e1e1e"></div>
<div style="left:720.0px;top:984px;width:1px;height:6px;background:#1e1e1e"></div>
<div style="left:720.0px;top:966px;width:1px;height:15px;background:#bdbdbd"></div>
<span class="t" style="left:727.1px;top:952.43px;font-size:11.3px;color:#c0c0c0;">75</span>
<div style="left:767.0px;top:942px;width:1px;height:8px;background:#1e1e1e"></div>
<div style="left:767.0px;top:984px;width:1px;height:6px;background:#1e1e1e"></div>
<div style="left:767.0px;top:966px;width:1px;height:15px;background:#bdbdbd"></div>
<span class="t" style="left:774.1px;top:952.43px;font-size:11.3px;color:#c0c0c0;">80</span>
<div style="left:814.0px;top:942px;width:1px;height:8px;background:#1e1e1e"></div>
<div style="left:814.0px;top:984px;width:1px;height:6px;background:#1e1e1e"></div>
<div style="left:814.0px;top:966px;width:1px;height:15px;background:#bdbdbd"></div>
<span class="t" style="left:821.1px;top:952.43px;font-size:11.3px;color:#c0c0c0;">85</span>
<div style="left:861.0px;top:942px;width:1px;height:8px;background:#1e1e1e"></div>
<div style="left:861.0px;top:984px;width:1px;height:6px;background:#1e1e1e"></div>
<div style="left:861.0px;top:966px;width:1px;height:15px;background:#bdbdbd"></div>
<span class="t" style="left:868.1px;top:952.43px;font-size:11.3px;color:#c0c0c0;">90</span>
<div style="left:908.0px;top:942px;width:1px;height:8px;background:#1e1e1e"></div>
<div style="left:908.0px;top:984px;width:1px;height:6px;background:#1e1e1e"></div>
<div style="left:908.0px;top:966px;width:1px;height:15px;background:#bdbdbd"></div>
<span class="t" style="left:915.1px;top:952.43px;font-size:11.3px;color:#c0c0c0;">95</span>
<div style="left:955.0px;top:942px;width:1px;height:8px;background:#1e1e1e"></div>
<div style="left:955.0px;top:984px;width:1px;height:6px;background:#1e1e1e"></div>
<div style="left:955.0px;top:966px;width:1px;height:15px;background:#bdbdbd"></div>
<span class="t" style="left:962.1px;top:952.43px;font-size:11.3px;color:#c0c0c0;">100</span>
<div style="left:1002.0px;top:942px;width:1px;height:8px;background:#1e1e1e"></div>
<div style="left:1002.0px;top:984px;width:1px;height:6px;background:#1e1e1e"></div>
<div style="left:1002.0px;top:966px;width:1px;height:15px;background:#bdbdbd"></div>
<span class="t" style="left:1009.1px;top:952.43px;font-size:11.3px;color:#c0c0c0;">105</span>
<div style="left:1049.0px;top:942px;width:1px;height:8px;background:#1e1e1e"></div>
<div style="left:1049.0px;top:984px;width:1px;height:6px;background:#1e1e1e"></div>
<div style="left:1049.0px;top:966px;width:1px;height:15px;background:#bdbdbd"></div>
<span class="t" style="left:1056.1px;top:952.43px;font-size:11.3px;color:#c0c0c0;">110</span>
<div style="left:1097.0px;top:942px;width:1px;height:8px;background:#1e1e1e"></div>
<div style="left:1097.0px;top:984px;width:1px;height:6px;background:#1e1e1e"></div>
<div style="left:1097.0px;top:966px;width:1px;height:15px;background:#bdbdbd"></div>
<span class="t" style="left:1104.1px;top:952.43px;font-size:11.3px;color:#c0c0c0;">115</span>
<div style="left:1144.0px;top:942px;width:1px;height:8px;background:#1e1e1e"></div>
<div style="left:1144.0px;top:984px;width:1px;height:6px;background:#1e1e1e"></div>
<div style="left:1144.0px;top:966px;width:1px;height:15px;background:#bdbdbd"></div>
<span class="t" style="left:1151.1px;top:952.43px;font-size:11.3px;color:#c0c0c0;">120</span>
<div style="left:28px;top:967px;width:7.5px;height:13px;background:#222;border-radius:2px"></div>
<span class="t" style="left:30px;top:967.77px;font-size:11.5px;color:#ffffff;">1</span>
<div style="left:1162px;top:950px;width:288px;height:40px;background:#444;"></div>
<div style="left:1171.5px;top:956.3px;width:49px;height:19px;background:#2b2b2b;border-radius:3px"></div>
<span class="t" style="left:1176px;top:960.77px;font-size:11.5px;color:#d8d8d8;">1</span>
<svg style="left:1231.9px;top:957.7px;" width="16" height="16" viewBox="0 0 16 16"><rect x="0" y="1" width="1.6" height="13" fill="#c8c8c8"/><path d="M2 7.5L8 1.5v12z M8 7.5L14 1.5v12z" fill="#c8c8c8"/></svg>
<svg style="left:1261.7px;top:957.7px;" width="16" height="16" viewBox="0 0 16 16"><rect x="0" y="1" width="1.6" height="13" fill="#c8c8c8"/><path d="M2 7.5L11 1.5v12z" fill="#c8c8c8"/></svg>
<svg style="left:1288px;top:957.7px;" width="16" height="16" viewBox="0 0 16 16"><rect x="1" y="0" width="3" height="15" fill="#e08a4a"/><path d="M5 7.5L13.5 1.5v12z" fill="#c8c8c8"/></svg>
<svg style="left:1316.7px;top:957.7px;" width="16" height="16" viewBox="0 0 16 16"><path d="M0 7.5L12 0.5v14z" fill="#c8c8c8"/></svg>
<svg style="left:1345.4px;top:957.7px;" width="16" height="16" viewBox="0 0 16 16"><path d="M12 7.5L0 0.5v14z" fill="#c8c8c8"/></svg>
<svg style="left:1373.5px;top:957.7px;" width="16" height="16" viewBox="0 0 16 16"><path d="M0 1.5L8.5 7.5L0 13.5z" fill="#c8c8c8"/><rect x="10" y="0" width="3" height="15" fill="#e08a4a"/></svg>
<svg style="left:1401.7px;top:957.7px;" width="16" height="16" viewBox="0 0 16 16"><path d="M0 1.5L9 7.5L0 13.5z" fill="#c8c8c8"/><rect x="10" y="1" width="1.6" height="13" fill="#c8c8c8"/></svg>
<svg style="left:1427.7px;top:957.7px;" width="16" height="16" viewBox="0 0 16 16"><path d="M0 1.5L6 7.5L0 13.5z M6 1.5L12 7.5L6 13.5z" fill="#c8c8c8"/><rect x="13.5" y="1" width="1.6" height="13" fill="#c8c8c8"/></svg>
<div style="left:0px;top:990px;width:1450px;height:2px;background:#303030;"></div>
<div style="left:0px;top:992px;width:1450px;height:37px;background:#444;"></div>
<svg style="left:2px;top:995px;" width="4" height="31" viewBox="0 0 4 31"><rect x="0" y="0" width="1" height="1" fill="#6a6a6a"/><rect x="3" y="0" width="1" height="1" fill="#6a6a6a"/><rect x="0" y="3" width="1" height="1" fill="#6a6a6a"/><rect x="3" y="3" width="1" height="1" fill="#6a6a6a"/><rect x="0" y="6" width="1" height="1" fill="#6a6a6a"/><rect x="3" y="6" width="1" height="1" fill="#6a6a6a"/><rect x="0" y="9" width="1" height="1" fill="#6a6a6a"/><rect x="3" y="9" width="1" height="1" fill="#6a6a6a"/><rect x="0" y="12" width="1" height="1" fill="#6a6a6a"/><rect x="3" y="12" width="1" height="1" fill="#6a6a6a"/><rect x="0" y="15" width="1" height="1" fill="#6a6a6a"/><rect x="3" y="15" width="1" height="1" fill="#6a6a6a"/><rect x="0" y="18" width="1" height="1" fill="#6a6a6a"/><rect x="3" y="18" width="1" height="1" fill="#6a6a6a"/><rect x="0" y="21" width="1" height="1" fill="#6a6a6a"/><rect x="3" y="21" width="1" height="1" fill="#6a6a6a"/><rect x="0" y="24" width="1" height="1" fill="#6a6a6a"/><rect x="3" y="24" width="1" height="1" fill="#6a6a6a"/><rect x="0" y="27" width="1" height="1" fill="#6a6a6a"/><rect x="3" y="27" width="1" height="1" fill="#6a6a6a"/><rect x="0" y="30" width="1" height="1" fill="#6a6a6a"/><rect x="3" y="30" width="1" height="1" fill="#6a6a6a"/></svg>
<div style="left:16px;top:1000.6px;width:50px;height:19.2px;background:#2b2b2b;border-radius:3px"></div>
<span class="t" style="left:21.7px;top:1006.27px;font-size:11.5px;color:#d8d8d8;">1</span>
<div style="left:75.5px;top:1000.4px;width:624px;height:19px;background:#2b2b2b;border-radius:3px"></div>
<div style="left:77px;top:1002px;width:383px;height:15.5px;background:#444;"></div>
<div style="left:77px;top:1002px;width:7.8px;height:15.5px;background:#a5a5a5;"></div>
<div style="left:452.3px;top:1002px;width:8px;height:15.5px;background:#a5a5a5;"></div>
<span class="t" style="left:93.5px;top:1006.27px;font-size:11.5px;color:#d8d8d8;">1</span>
<span class="t" style="left:426.5px;top:1006.27px;font-size:11.5px;color:#d8d8d8;">120</span>
<svg style="left:267px;top:1004px;" width="4" height="12" viewBox="0 0 4 12"><rect x="0" y="0" width="1" height="1" fill="#8a8a8a"/><rect x="3" y="0" width="1" height="1" fill="#8a8a8a"/><rect x="0" y="3" width="1" height="1" fill="#8a8a8a"/><rect x="3" y="3" width="1" height="1" fill="#8a8a8a"/><rect x="0" y="6" width="1" height="1" fill="#8a8a8a"/><rect x="3" y="6" width="1" height="1" fill="#8a8a8a"/><rect x="0" y="9" width="1" height="1" fill="#8a8a8a"/><rect x="3" y="9" width="1" height="1" fill="#8a8a8a"/></svg>
<div style="left:708px;top:1000.4px;width:49.6px;height:19.4px;background:#2b2b2b;border-radius:3px"></div>
<span class="t" style="left:712px;top:1006.27px;font-size:11.5px;color:#d8d8d8;">200</span>
<svg style="left:777.5px;top:1001px;" width="3" height="18" viewBox="0 0 3 18"><rect x="1" y="0" width="1" height="18" fill="#8c8c8c"/><rect x="0" y="4.5" width="3" height="9.0" fill="#8c8c8c"/></svg>
<svg style="left:807px;top:1000px;" width="14" height="19" viewBox="0 0 14 19"><path d="M0 3h9v15L4.5 13L0 18z" fill="#e07a4a"/><path d="M10 0v8M6 4h8" stroke="#e8e8e8" stroke-width="2"/></svg>
<svg style="left:842.2px;top:1001px;" width="3" height="18" viewBox="0 0 3 18"><rect x="1" y="0" width="1" height="18" fill="#8c8c8c"/><rect x="0" y="4.5" width="3" height="9.0" fill="#8c8c8c"/></svg>
<svg style="left:868.3px;top:1006px;" width="10.5" height="5.5" viewBox="0 0 10.5 5.5"><path d="M0.5 0.5h9.5L5.25 5z" fill="none" stroke="#a0a0a0"/></svg>
<div style="left:885.4px;top:1000.3px;width:101px;height:19.4px;background:#444;border:1px solid #3a3a3a;border-radius:3px;box-sizing:border-box"></div>
<span class="t" style="left:891.2px;top:1006.19px;font-size:11px;color:#d0d0d0;">No Character Set</span>
<svg style="left:1000.7px;top:1006px;" width="10.5" height="5.5" viewBox="0 0 10.5 5.5"><path d="M0.5 0.5h9.5L5.25 5z" fill="none" stroke="#a0a0a0"/></svg>
<div style="left:1017.2px;top:1000.3px;width:101.3px;height:19.4px;background:#444;border:1px solid #3a3a3a;border-radius:3px;box-sizing:border-box"></div>
<span class="t" style="left:1022.8px;top:1006.19px;font-size:11px;color:#d0d0d0;">No Anim Layer</span>
<svg style="left:1138.5px;top:1001px;" width="3" height="18" viewBox="0 0 3 18"><rect x="1" y="0" width="1" height="18" fill="#8c8c8c"/><rect x="0" y="4.5" width="3" height="9.0" fill="#8c8c8c"/></svg>
<div style="left:1164.2px;top:1000px;width:95px;height:18.75px;background:#5b5b5b;border-radius:2px"></div>
<div style="left:1238.5px;top:1000px;width:1px;height:18.75px;background:#474747;"></div>
<span class="t" style="left:1167.3px;top:1005.27px;font-size:11.5px;color:#c8c8c8;">24 fps</span>
<svg style="left:1244px;top:1006px;" width="11" height="6" viewBox="0 0 11 6"><path d="M0 0h11L5.5 6z" fill="#cfcfcf"/></svg>
<svg style="left:1274.6px;top:1002px;" width="17" height="15" viewBox="0 0 17 15"><path d="M3 9V6a2 2 0 0 1 2-2h9M14 6v3a2 2 0 0 1-2 2H3" fill="none" stroke="#d0d0d0" stroke-width="1.8"/><path d="M12 1l4 3-4 3zM5 8l-4 3 4 3z" fill="#d0d0d0"/></svg>
<div style="left:1302.7px;top:998px;width:23.55px;height:23.25px;background:#5285a6;"></div>
<svg style="left:1305px;top:1001px;" width="19" height="17" viewBox="0 0 19 17"><rect x="1" y="6" width="17" height="10" fill="none" stroke="#e08a4a" stroke-width="1.6"/><path d="M5 6v10M10 6v10M14 6v10" stroke="#e08a4a" stroke-width="1.2"/><path d="M13 0l6 4-6 4z" fill="#d8d8d8"/></svg>
<svg style="left:1345.0px;top:1001px;" width="3" height="18" viewBox="0 0 3 18"><rect x="1" y="0" width="1" height="18" fill="#8c8c8c"/><rect x="0" y="4.5" width="3" height="9.0" fill="#8c8c8c"/></svg>
<svg style="left:1369.4px;top:1002px;" width="18" height="15" viewBox="0 0 18 15"><path d="M0 5h4l5-4v13l-5-4H0z" fill="#c8c8c8"/><path d="M11 4a5 5 0 0 1 0 7M13.5 2a8 8 0 0 1 0 11" fill="none" stroke="#c8c8c8" stroke-width="1.3"/></svg>
<svg style="left:1399.6px;top:1001px;" width="16" height="17" viewBox="0 0 16 17"><path d="M2 8a6 6 0 0 1 11-3M14 9a6 6 0 0 1-11 3" fill="none" stroke="#c8c8c8" stroke-width="1.5"/><path d="M13 1v4h-4M3 16v-4h4" fill="none" stroke="#c8c8c8" stroke-width="1.3"/><rect x="7" y="5" width="2.5" height="7" fill="#e08a4a"/></svg>
<svg style="left:1426.7px;top:1000px;" width="18" height="19" viewBox="0 0 18 19"><circle cx="5" cy="5" r="3" fill="none" stroke="#c8c8c8" stroke-width="2"/><circle cx="13" cy="6" r="2" fill="#e08a4a"/><path d="M12 8l-3 5-4 1M12 8l2 5 3 4M11 11l-3 6M13 10l4-1" stroke="#e08a4a" stroke-width="2" fill="none"/></svg>
<div style="left:0px;top:1028.5px;width:1450px;height:2px;background:#303030;"></div>
<div style="left:0px;top:1030.5px;width:1450px;height:31px;background:#444;"></div>
<svg style="left:2px;top:1033px;" width="4" height="27" viewBox="0 0 4 27"><rect x="0" y="0" width="1" height="1" fill="#6a6a6a"/><rect x="3" y="0" width="1" height="1" fill="#6a6a6a"/><rect x="0" y="3" width="1" height="1" fill="#6a6a6a"/><rect x="3" y="3" width="1" height="1" fill="#6a6a6a"/><rect x="0" y="6" width="1" height="1" fill="#6a6a6a"/><rect x="3" y="6" width="1" height="1" fill="#6a6a6a"/><rect x="0" y="9" width="1" height="1" fill="#6a6a6a"/><rect x="3" y="9" width="1" height="1" fill="#6a6a6a"/><rect x="0" y="12" width="1" height="1" fill="#6a6a6a"/><rect x="3" y="12" width="1" height="1" fill="#6a6a6a"/><rect x="0" y="15" width="1" height="1" fill="#6a6a6a"/><rect x="3" y="15" width="1" height="1" fill="#6a6a6a"/><rect x="0" y="18" width="1" height="1" fill="#6a6a6a"/><rect x="3" y="18" width="1" height="1" fill="#6a6a6a"/><rect x="0" y="21" width="1" height="1" fill="#6a6a6a"/><rect x="3" y="21" width="1" height="1" fill="#6a6a6a"/><rect x="0" y="24" width="1" height="1" fill="#6a6a6a"/><rect x="3" y="24" width="1" height="1" fill="#6a6a6a"/></svg>
<svg style="left:14.5px;top:1039.4px;" width="17" height="17" viewBox="0 0 17 17"><circle cx="8.3" cy="8.3" r="8.3" fill="#8a8a8a"/><text x="8.3" y="13" font-size="13" font-weight="bold" text-anchor="middle" fill="#3a3a3a" font-family="Liberation Sans">?</text></svg>
<svg style="left:602px;top:1048px;" width="14" height="13" viewBox="0 0 14 13"><path d="M0 0L14 13M4 0L14 9M8 0l6 5" stroke="#2a2a2a" stroke-width="1.2"/></svg>
<div style="left:616.5px;top:1030.5px;width:2px;height:31px;background:#383838;"></div>
<svg style="left:621px;top:1034px;" width="4" height="26" viewBox="0 0 4 26"><rect x="0" y="0" width="1" height="1" fill="#6a6a6a"/><rect x="3" y="0" width="1" height="1" fill="#6a6a6a"/><rect x="0" y="3" width="1" height="1" fill="#6a6a6a"/><rect x="3" y="3" width="1" height="1" fill="#6a6a6a"/><rect x="0" y="6" width="1" height="1" fill="#6a6a6a"/><rect x="3" y="6" width="1" height="1" fill="#6a6a6a"/><rect x="0" y="9" width="1" height="1" fill="#6a6a6a"/><rect x="3" y="9" width="1" height="1" fill="#6a6a6a"/><rect x="0" y="12" width="1" height="1" fill="#6a6a6a"/><rect x="3" y="12" width="1" height="1" fill="#6a6a6a"/><rect x="0" y="15" width="1" height="1" fill="#6a6a6a"/><rect x="3" y="15" width="1" height="1" fill="#6a6a6a"/><rect x="0" y="18" width="1" height="1" fill="#6a6a6a"/><rect x="3" y="18" width="1" height="1" fill="#6a6a6a"/><rect x="0" y="21" width="1" height="1" fill="#6a6a6a"/><rect x="3" y="21" width="1" height="1" fill="#6a6a6a"/><rect x="0" y="24" width="1" height="1" fill="#6a6a6a"/><rect x="3" y="24" width="1" height="1" fill="#6a6a6a"/></svg>
<span class="t" style="left:633.4px;top:1043.27px;font-size:11.5px;color:#e0e0e0;">MEL</span>
<div style="left:662px;top:1038px;width:185.7px;height:20px;background:#2b2b2b;border-radius:3px"></div>
<svg style="left:849px;top:1040px;" width="4" height="16" viewBox="0 0 4 16"><rect x="0" y="0" width="1" height="1" fill="#8a8a8a"/><rect x="3" y="0" width="1" height="1" fill="#8a8a8a"/><rect x="0" y="3" width="1" height="1" fill="#8a8a8a"/><rect x="3" y="3" width="1" height="1" fill="#8a8a8a"/><rect x="0" y="6" width="1" height="1" fill="#8a8a8a"/><rect x="3" y="6" width="1" height="1" fill="#8a8a8a"/><rect x="0" y="9" width="1" height="1" fill="#8a8a8a"/><rect x="3" y="9" width="1" height="1" fill="#8a8a8a"/><rect x="0" y="12" width="1" height="1" fill="#8a8a8a"/><rect x="3" y="12" width="1" height="1" fill="#8a8a8a"/><rect x="0" y="15" width="1" height="1" fill="#8a8a8a"/><rect x="3" y="15" width="1" height="1" fill="#8a8a8a"/></svg>
<div style="left:853.5px;top:1038px;width:491.5px;height:20px;background:#e8d88a;border-radius:2px"></div>
<span class="t" style="left:858px;top:1043.23px;font-size:11.9px;color:#222;">// Warning: Arnold renderer not loaded. The MtoA plug-in needed for this scene is not loaded</span>
<div style="left:1355.8px;top:1035.8px;width:61px;height:26px;background:#595959;border-radius:2px"></div>
<span class="t" style="left:1361px;top:1043.27px;font-size:11.5px;color:#e0e0e0;">More Info</span>
<svg style="left:1425.6px;top:1039px;" width="18" height="18" viewBox="0 0 18 18"><rect x="0.5" y="0.5" width="17" height="17" fill="#c8c8c8" stroke="#c8c8c8"/><rect x="1.5" y="3.5" width="15" height="13" fill="#444"/><rect x="2" y="1" width="1" height="1" fill="#444"/><rect x="4" y="1" width="1" height="1" fill="#444"/><rect x="6" y="1" width="1" height="1" fill="#444"/><text x="9" y="14" font-size="10" text-anchor="middle" fill="#c8c8c8" font-family="Liberation Mono">{;}</text></svg>
</body></html>
